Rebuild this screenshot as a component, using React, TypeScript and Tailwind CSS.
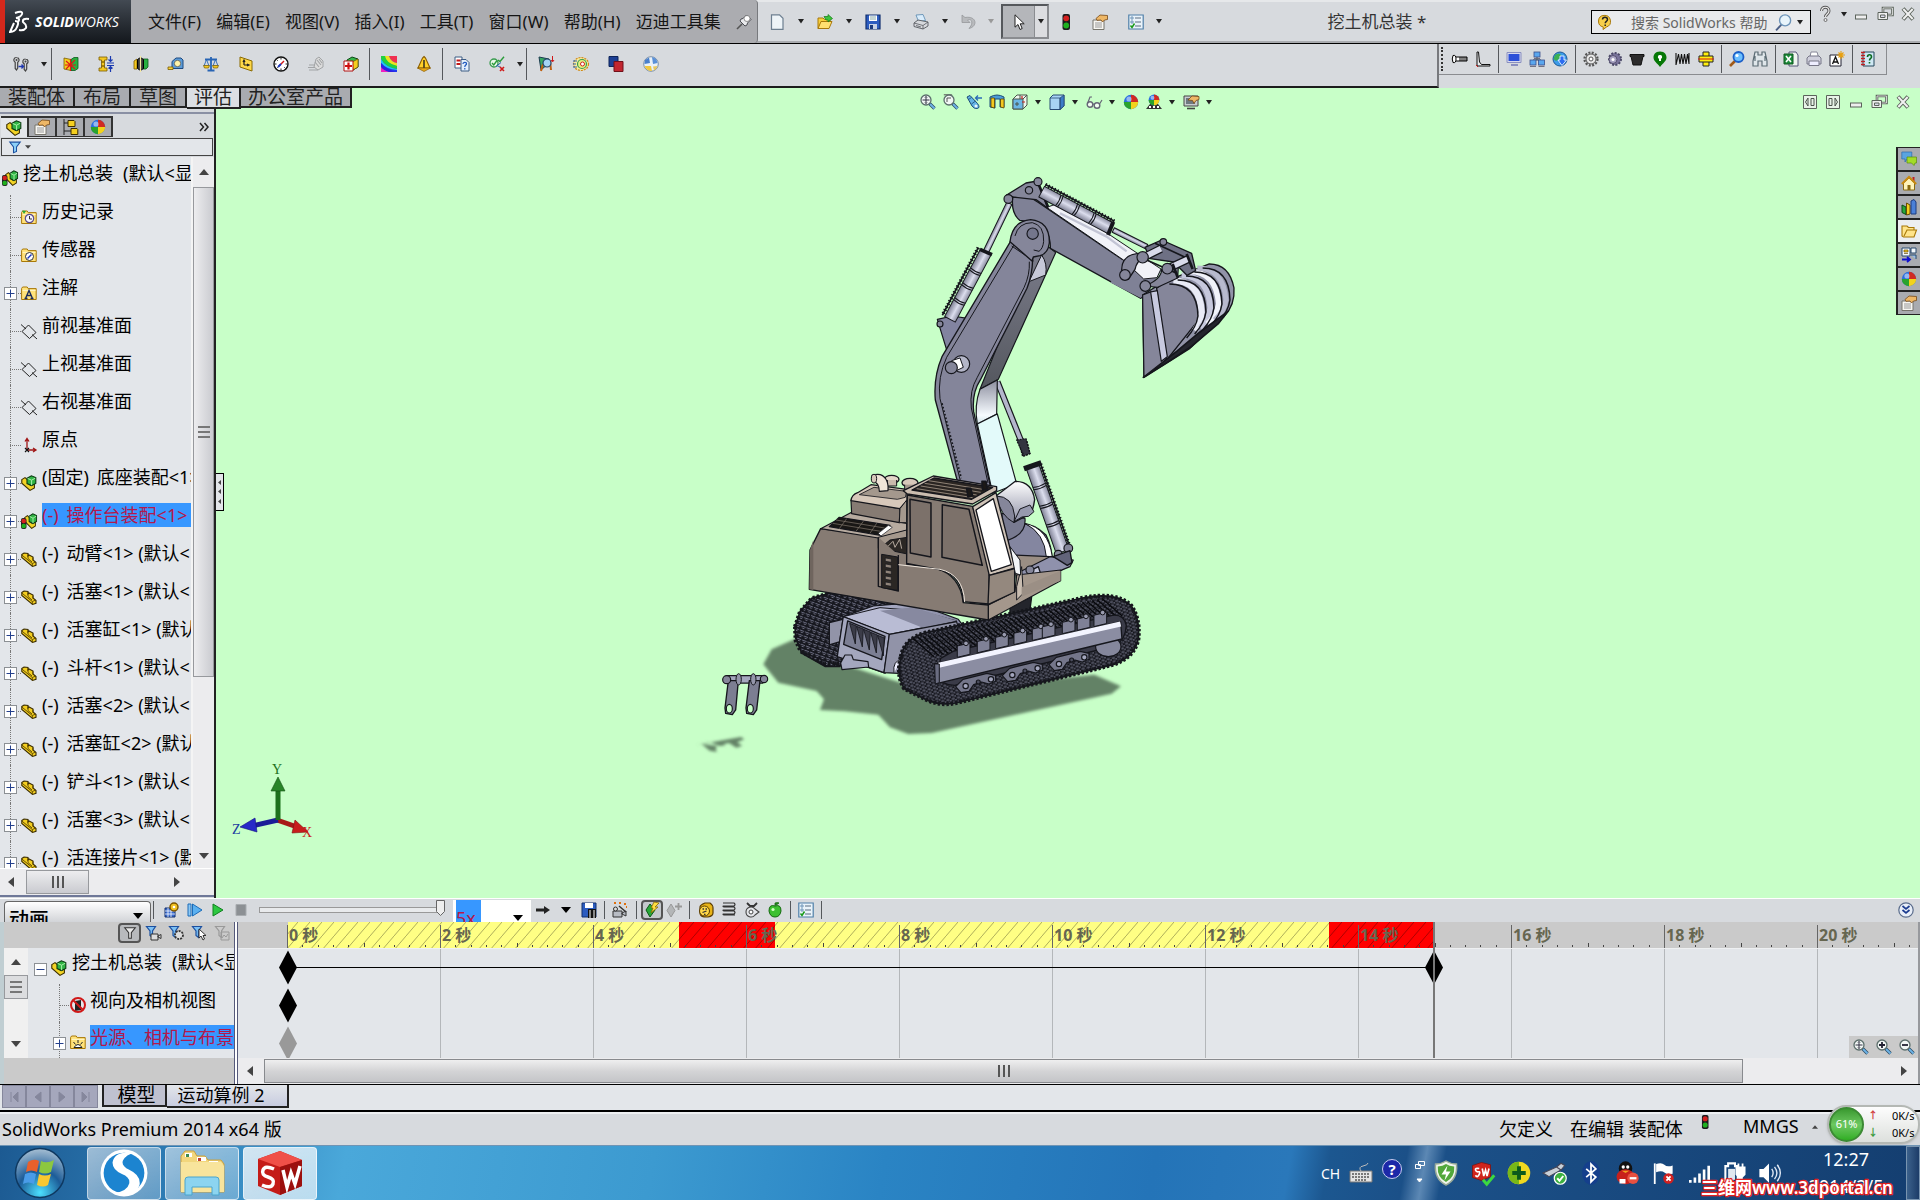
import React from "react";

const P = (d: string, fill = "none", stroke?: string, w = 1) => (
  <path d={d} fill={fill} stroke={stroke} strokeWidth={w} />
);

const mag = (inner: React.ReactNode) => (
  <>
    <path d="M9.5 9.5l5 5" stroke="#2f4f66" strokeWidth="3.4" />
    <path d="M10 10l4.5 4.5" stroke="#6fb4e8" strokeWidth="1.8" />
    <circle cx="6" cy="6" r="5" fill="#f2f7f5" stroke="#5c6f6c" strokeWidth="1.3" />
    {inner}
  </>
);

const sphere = (
  <>
    <circle cx="8" cy="8" r="7.2" fill="#2b6fe0" />
    {P("M8 8V.8A7.2 7.2 0 0 1 15.2 8z", "#d02a22")}
    {P("M8 8h7.2A7.2 7.2 0 0 1 8 15.2z", "#f2d21c")}
    {P("M8 8v7.2A7.2 7.2 0 0 1 .8 8z", "#2aa32c")}
    <circle cx="6" cy="5" r="2.6" fill="#fff" opacity=".5" />
  </>
);

const pc = (x: number, y: number) => (
  <>
    <rect x={x} y={y} width="6" height="5" fill="#5aa7ee" stroke="#3a4f8c" strokeWidth=".8" />
    <path d={`M${x} ${y + 6.4}h6`} stroke="#667" strokeWidth="1" />
  </>
);

const folder = (
  <>
    {P("M.6 14.5V3.5l1-1.5h4.6l1 1.6h8v10.9z", "#ffe27a", "#a87808")}
    {P("M1.6 5.4h13", "none", "#fff6c8")}
  </>
);

const asm = (
  <>
    {P("M.8 4.6L4 2.6l3 2.6v2.6l2.6 2.6 3.8-1.4v4L9 15.4.8 8.2z", "#f2d326", "#3a2c00", 1.1)}
    {P("M6 3.2L10.4.8l4.4 1.8v5.8l-4.2 2.2L6 8.6z", "#2fb344", "#0c3a12", 1.1)}
    {P("M6.6 3.4l4 1.8 3.6-2M10.6 5.2v5", "none", "#a8f0a8")}
  </>
);

const funnel = (c: string, f: string) => P("M1.5 1.5h9L7.5 6v6.5L5 10.5V6z", f, c, 1.2);

const ICONS: Record<string, React.ReactNode> = {
  pin: (
    <>
      {P("M1 15l5-5", "none", "#555", 1.6)}
      {P("M4 7l5 5 2-1 .5-2L15 5.500 10.5 1 7 4.500 5 5z", "#e9eaec", "#4c4e54")}
      <circle cx="11" cy="4.500" r="3" fill="#fff" stroke="#666" strokeWidth=".7" />
    </>
  ),
  doc: P("M2.500.8h8L14 4.300v11H2.500z", "#eef4f8", "#6d7f90", 1.2),
  open: (
    <>
      {P("M1 14.500V4h5l1.500 1.500H13v3", "#f7cf3c", "#a8780a")}
      {P("M1 14.500l3-7h11l-3 7z", "#ffe070", "#a8780a")}
      {P("M7 2.500h4v-2l4.500 4L11 8V6H9z", "#3cc23c", "#147a14", 0.7)}
    </>
  ),
  save: (
    <>
      {P("M1 1h14v14H1z", "#2c5cc0", "#12306e", 1.2)}
      {P("M4 1.500h8V7H4z", "#fff")}
      {P("M5 3h6M5 5h6", "none", "#8aa")}
      {P("M4 10h8v5H4z", "#c7d2e4")}
      {P("M5 11h3v4H5z", "#1b3a7c")}
    </>
  ),
  print: (
    <>
      {P("M3 1l7-.5 2.500 6-7 1z", "#d9ecfb", "#5686ad", 0.8)}
      {P("M1 9l4-3 10 2v4l-5 3-9-2.500z", "#d6d8dc", "#55585e", 0.9)}
      {P("M1 9l9 2.500L15 8M10 11.500V15M3 11.500l5 1.500", "none", "#55585e", 0.8)}
    </>
  ),
  undo: P("M1 1v7.500h8L6.500 6c4-2 6.500 3 1.500 8.500 9-2 8-13-4-11z", "#b8babd", "#96989b", 0.8),
  cursor: P("M4 .8v12.400l3-2.700 2 5 2.200-1-2-4.700h4z", "#fff", "#222"),
  light: (
    <>
      <rect x="4.500" y="0" width="7.500" height="16" rx="2" fill="#1c1c1c" />
      <circle cx="8.200" cy="4.300" r="2.900" fill="#d42020" />
      <circle cx="8.200" cy="11.500" r="2.900" fill="#1fb01f" />
    </>
  ),
  props: (
    <>
      {P("M1 6h11v9.500H1z", "#f7f6f2", "#77756c")}
      {P("M3 9h7M3 11h7M3 13h7", "none", "#999")}
      {P("M4 4.500L8 1l7.500.5v4l-3 .5-2 2-1.500-2-4 .3z", "#eeb766", "#754716", 0.8)}
    </>
  ),
  opts: (
    <>
      {P("M.8 1h14.400v14H.8z", "#eaf3fa", "#4f7fa8", 1.2)}
      {P("M3 3h2v2H3zM3 7h2v2H3z", "#fff", "#4f7fa8", 0.8)}
      {P("M7 4h6M7 8h6M7 12h6", "none", "#5a6d80")}
      {P("M2.500 11.500l1.500 2 2.500-4", "none", "#199a19", 1.5)}
    </>
  ),
  helpb: (
    <>
      {P("M1.500 7a6 6 0 1 1 8 6l-3.500 2.500.3-2.500A6 6 0 0 1 1.500 7z", "#f7cf4a", "#a8780a")}
      {P("M5.500 5.500c0-3 5-3 5 0 0 2-2.300 1.800-2.300 3.800M8.200 10.500v1.500", "none", "#222", 1.5)}
    </>
  ),
  search: (
    <>
      {P("M6 10l-5 5.500", "none", "#4c5f86", 1.8)}
      <circle cx="9.500" cy="6" r="5.200" fill="#e8f4fb" stroke="#6c93b8" strokeWidth="1.3" />
    </>
  ),
  q: (
    <>
      {P("M4.500 5c0-5 7.500-5 7.500 0 0 3-3.500 3-3.500 6", "none", "#555", 3)}
      {P("M4.500 5c0-5 7.500-5 7.500 0 0 3-3.500 3-3.500 6", "none", "#eee", 1.2)}
      <circle cx="8.500" cy="14" r="1.500" fill="#eee" stroke="#555" strokeWidth=".8" />
    </>
  ),
  min: <rect x="2.500" y="9" width="11" height="4" fill="#eee" stroke="#5b635b" />,
  rest: (
    <>
      {P("M6 2h9.500v7H6z", "none", "#5b635b", 2.6)}
      {P("M6 2h9.500v7H6z", "none", "#eee", 0.8)}
      {P("M1 6.500h9.500v7H1z", "#eee", "#5b635b")}
      {P("M3.500 9h4.500v2.500H3.500z", "#dde", "#5b635b")}
    </>
  ),
  close: (
    <>
      {P("M3 2.500l10 11M13 2.500l-10 11", "none", "#5b635b", 4)}
      {P("M3.300 3l9.400 10M12.700 3l-9.400 10", "none", "#f1f1f1", 2)}
    </>
  ),
  paneL: (
    <>
      {P("M1.500 1.500h13v13h-13z", "#e8f3e8", "#5b635b")}
      {P("M6 4L3.500 8 6 12zM9 4.500h3v7H9z", "none", "#4b534b")}
    </>
  ),
  paneR: (
    <>
      {P("M1.500 1.500h13v13h-13z", "#e8f3e8", "#5b635b")}
      {P("M10 4l2.500 4-2.500 4zM4 4.500h3v7H4z", "none", "#4b534b")}
    </>
  ),
  mates: (
    <>
      {P("M3.500 1.500a2.600 2.600 0 0 1 1.200 4.900V12l-1.200 2-1.300-1.500V6.400A2.600 2.600 0 0 1 3.500 1.500z", "#d4d6d8", "#444", 1.2)}
      {P("M12.500 3a2.600 2.600 0 0 1 1.200 4.900V13l-1.200 2-1.300-1.500V7.900A2.600 2.600 0 0 1 12.500 3z", "#d4d6d8", "#444", 1.2)}
      <circle cx="3.500" cy="4" r="1" fill="#444" />
      <circle cx="12.500" cy="5.500" r="1" fill="#444" />
      {P("M5.500 10.500h5M8.500 8.500l2 2-2 2", "none", "#2038b0", 1.3)}
    </>
  ),
  interf: (
    <>
      {P("M1 2l7 1.500v11L1 13z", "#f4cf20", "#7a5c00", 0.8)}
      {P("M8 3.500l3-2h4v11l-3 2H8z", "#28b040", "#0c5a1c", 0.8)}
      {P("M3 5l9 8M3 13l9-9M7.500 3v12M2 9h11", "none", "#e01818", 1.2)}
    </>
  ),
  clear: (
    <>
      {P("M1 1h8v3H6.500v2h-3V4H1zM1 15h8v-3H6.500v-2h-3v2H1zM3.500 6h3v4h-3z", "#f4c820", "#7a5c00", 0.8)}
      {P("M12.500 0v5M12.500 16v-5M10.500 3.500l2 2 2-2M10.500 12.500l2-2 2 2M9 7h7M9 9.500h7", "none", "#1a3ab0", 1.2)}
    </>
  ),
  hole: (
    <>
      {P("M1 5l3-2v10H1z", "#f4c820", "#7a5c00", 0.8)}
      {P("M10 3h5v8l-2 2h-3z", "#28b040", "#0c5a1c", 0.8)}
      {P("M4.500 3.500l3-2 3 2v9l-3 2-3-2z", "#3a3a3a", "#000")}
      {P("M7.500 0v16", "none", "#f6e9a0", 1.2)}
    </>
  ),
  tape: (
    <>
      {P("M4 11V5.500L8 2h5l2 2v8.500H4z", "#5b9bd8", "#1e4a80")}
      <circle cx="9.500" cy="7.500" r="3.200" fill="#fff3a8" stroke="#555" strokeWidth=".8" />
      {P("M0 11h5v2.500H0z", "#f7d33c", "#7a5c00", 0.8)}
    </>
  ),
  scale: (
    <>
      {P("M8 1v13M2 3.500h12M4.500 14.500h7", "none", "#2864b4", 1.8)}
      {P("M3.500 3.500L1 10h5zM12.500 3.500L10 10h5z", "none", "#2864b4", 0.9)}
      {P("M.5 9.500h6L5.500 12H1.500zM9.500 9.500h6l-1 2.500h-4z", "#f4c820", "#7a5c00", 0.7)}
    </>
  ),
  section: (
    <>
      {P("M2 1l12 4v10L2 11z", "#ffd94a", "#8a6a00")}
      {P("M6 9V5M5 6l1-2 1 2M6 9h4M9 8l2 1-2 1", "none", "#222", 1.2)}
    </>
  ),
  gauge: (
    <>
      <circle cx="8" cy="8" r="7" fill="#fff" stroke="#111" strokeWidth="1.4" />
      {P("M8 1.500v2M8 12.500v2M1.500 8h2M12.500 8h2M3.500 3.500l1.200 1.200M12.500 12.500l-1.200-1.200M3.500 12.500l1.200-1.200", "none", "#222")}
      {P("M6 10l5-5", "none", "#d01818", 1.5)}
      {P("M5 11l3-3", "none", "#1838c0", 1.8)}
    </>
  ),
  handgray: (
    <>
      {P("M8 3l3-2 4 4v6l-5 3-4-3z", "#dcdcdc", "#a2a4a6")}
      {P("M1 9h6M0 11.500h7M1 14h9M9 4l4 5M11 3l3 4M7 6l4 5", "none", "#a2a4a6", 1.1)}
    </>
  ),
  cross: (
    <>
      {P("M4 4l5-3 6 2v8l-5 3-6-3z", "#35b548", "#0c4a16")}
      {P("M9 6l6-3v8l-5 3z", "#f4cf20", "#6a4c00", 0.7)}
      {P("M1 5h9v10H1z", "#fff", "#b01010")}
      {P("M5.500 6.500v7M2 10h7", "none", "#d01010", 2.2)}
    </>
  ),
  rainbow: (
    <>
      {P("M0 0h16v16H0z", "#2038f0")}
      {P("M8 0h8v7Q10 6 8 0z", "#f03050")}
      {P("M0 0h8q2 6 8 7v3Q6 9 4 4L0 3z", "#f0e020")}
      {P("M0 0h4q1 7 12 10v3Q4 11 0 3z", "#20d040")}
      {P("M0 3q4 8 16 10v1Q5 13 0 7z", "#20c8f0")}
      {P("M0 7q5 6 14 9H8Q2 14 0 11z", "#3020e0")}
      {P("M0 11q2 3 8 5H0z", "#f020c0")}
    </>
  ),
  warn: (
    <>
      {P("M8 .5l1.500 1.500L14 12H2L6.500 2z", "#ffd028", "#8a5c00", 1.1)}
      {P("M8 4v8", "none", "#222", 1.4)}
      {P("M1.500 12h13L8 15.500z", "#e8a818", "#8a5c00", 0.7)}
    </>
  ),
  compare: (
    <>
      {P("M1 1h7v11H1z", "#fff", "#3c5c84")}
      {P("M2.500 4.500h4M2.500 8h4", "none", "#c01818", 1.8)}
      {P("M7 3.500h5l3 3V15H7z", "#e3eefa", "#3c5c84")}
      {P("M9 8c0-2.500 4-2 3.500 0-.3 1.200-1.700 1-1.700 3M10.800 12v1.500", "none", "#205ac0", 1.2)}
    </>
  ),
  checker: (
    <>
      <circle cx="5" cy="7" r="4" fill="#e8f8e8" stroke="#3a9c50" strokeWidth="1.3" />
      {P("M3 7l1.800 2L8 4.500M9 4l2 1.500L15 .8", "none", "#2a9c3a", 1.4)}
      {P("M7 10.500l5-4M8 9.500l4 2", "none", "#2864b4", 1)}
      {P("M11 11l4 4M15 11l-4 4", "none", "#d01818", 1.6)}
    </>
  ),
  sym: (
    <>
      {P("M1 1l10 2v4L3 14z", "#38a860", "#1c3c50")}
      {P("M3 15L5 8M12 5l1 9", "none", "#c06010", 2)}
      <circle cx="9" cy="7" r="4" fill="#a4d4f4" stroke="#246" strokeWidth="1.2" />
      {P("M14.500 0v5M13 4l1.500 2L16 4", "none", "#d01818")}
    </>
  ),
  wave: (
    <>
      <ellipse cx="8" cy="8" rx="7.500" ry="6.500" fill="#f8eca0" stroke="#d08a18" strokeDasharray="2 1" strokeWidth="1.200" />
      <circle cx="9" cy="8" r="4.500" fill="#e8f080" stroke="#3a9c50" strokeWidth="1.200" />
      <circle cx="9.500" cy="8" r="2" fill="#fff" stroke="#d02020" />
      {P("M0 5h4M0 8h3M0 11h4", "none", "#2864b4")}
    </>
  ),
  overlap: (
    <>
      {P("M1 .5h9v10H1z", "#1c3f94", "#0e2458")}
      {P("M6 5.500h9v10H6z", "#c22630", "#70101a")}
    </>
  ),
  ball3: (
    <>
      <circle cx="8" cy="8" r="7.300" fill="#e9f1f8" stroke="#7c90a8" />
      {P("M9 1a7 7 0 0 1 5.500 6L10 8z", "#5a90d8")}
      {P("M1.500 10A7 7 0 0 0 9 15l-1-5z", "#f2c840")}
      {P("M2 4l4-2.500L7 7 1.500 8z", "#4a80cc")}
      {P("M14.500 10A7 7 0 0 1 11 14.500l-1-4z", "#e8c860")}
    </>
  ),
  bolt: P("M1 4.500q3-1 3 3.500t-3 3.500q-1.500-3.500 0-7zM4 6h11v4H4M8 6v4M10 6v4M12 6v4M14 6v4", "#fff", "#000"),
  lshape: (
    <>
      {P("M2 1h1.500l1 10 2 2.500H15V15H2z", "#e8eaec", "#111", 1)}
      {P("M1 14l2 2", "none", "#d01818", 1)}
    </>
  ),
  monitor: (
    <>
      {P("M1 1.500h14v10H1z", "#d7d9ee", "#8a90c0")}
      {P("M2.500 3h11v7h-11z", "#2c50d8")}
      {P("M5 14h7", "none", "#8a90c0", 2)}
    </>
  ),
  net: (
    <>
      {P("M8 6v3M4 9h8", "none", "#345")}
      {pc(5, 1)}
      {pc(1, 9)}
      {pc(9.5, 9)}
    </>
  ),
  globe: (
    <>
      <circle cx="8" cy="8" r="7" fill="#3c9ae8" stroke="#1c5a98" />
      {P("M3 4q4-3 6 0l-2 4-3 2-2.500-2z", "#3ab054")}
      {P("M8 5h4v4h2.500L10 14.500 6 9h2z", "#2c6cf0", "#fff", 0.8)}
    </>
  ),
  gear: (
    <>
      <circle cx="8" cy="8" r="6.500" fill="none" stroke="#555" strokeWidth="2.200" strokeDasharray="2 1.400" />
      <circle cx="8" cy="8" r="5" fill="#e8e8e8" stroke="#555" />
      <circle cx="8" cy="8" r="2" fill="#fff" stroke="#555" />
    </>
  ),
  gear2: (
    <>
      <circle cx="9" cy="8" r="6" fill="#7a749c" stroke="#4c4a68" strokeWidth="2" strokeDasharray="2 1.400" />
      <circle cx="7" cy="8.500" r="4" fill="#aaa6c4" stroke="#55506f" />
      <circle cx="7" cy="8.500" r="1.500" fill="#fff" />
    </>
  ),
  pot: P("M1 3.500h14v2h-1L12 14H4L2 5.500H1z", "#2c2c2c", "#111"),
  drop: (
    <>
      {P("M8 .5C3 .5 1.500 4 1.500 6.500 1.500 10 5 12 8 16c3-4 6.500-6 6.500-9.500C14.500 4 13 .5 8 .5z", "#067806")}
      {P("M8 4a2 2 0 0 1 1 3.800V10H7V7.800A2 2 0 0 1 8 4z", "#fff")}
    </>
  ),
  spring: P("M1 2v12L3.500 3 5 13 6.500 3 8 13 9.500 3 11 13 12.500 3 14 13V2", "none", "#111", 1.1),
  coupling: (
    <>
      {P("M5 1h6v14H5z", "#ffee10", "#222")}
      {P("M1 5h14v6H1z", "#ffee10", "#222")}
      {P("M0 8h16", "none", "#d01818")}
    </>
  ),
  magb: (
    <>
      {P("M6 10l-5 5", "none", "#a05a18", 2.6)}
      <circle cx="9.500" cy="6" r="5" fill="#6cc0ff" stroke="#1c60c8" strokeWidth="1.800" />
      <circle cx="8" cy="4.500" r="1.600" fill="#fff" />
    </>
  ),
  bino: P("M3 1h3v3h4V1h3l2 9v5h-5v-5H6v5H1v-5zM3 5v5M13 5v5", "#dfe6ea", "#5c6c74", 1.2),
  excel: (
    <>
      {P("M6 1h7l2 3v11H6z", "#f0f6f0", "#557")}
      {P("M1 3h9v10H1z", "#1d8a3a", "#0e5a20")}
      {P("M3 5l5 6M8 5l-5 6", "none", "#fff", 1.6)}
    </>
  ),
  print2: (
    <>
      {P("M4 6l1-5h6l1.500 5z", "#fff", "#889")}
      {P("M1 7l2-2h10l2 2v6H1z", "#cfcfdc", "#778")}
      {P("M3 10h10v4.500H3z", "#eef", "#778")}
    </>
  ),
  anote: (
    <>
      {P("M1 4h11v11H1z", "#fff", "#223")}
      {P("M3.500 13L6.500 6l3 7M4.500 11h4", "none", "#111", 1.3)}
      {P("M12 0v8M8 4h8M9.500 1.500l5 5M14.500 1.500l-5 5", "none", "#e8a010", 1.1)}
    </>
  ),
  bookq: (
    <>
      {P("M3 1h11v14H3z", "#cfe8f4", "#27485c")}
      {P("M1 1.500h4M1 4.500h4M1 7.500h4M1 10.500h4M1 13.500h4", "none", "#c02020", 1.4)}
      {P("M7.500 6c0-3 4-3 4 0 0 1.500-2 1.500-2 3.500M9.500 11v1.500", "none", "#0a6a20", 1.6)}
    </>
  ),
  zfit: mag(P("M6 2.500v7M2.500 6h7M5 3.500l1-1 1 1M5 8.500l1 1 1-1", "none", "#334", 1)),
  zin: mag(P("M6 3v6M3 6h6", "none", "#223", 1.8)),
  zout: mag(P("M3 6h6", "none", "#223", 1.8)),
  zarea: (
    <>
      {P("M.8.8h8v4", "none", "#555")}
      {mag(P("M4 8V4h4", "none", "#555", 1))}
    </>
  ),
  prev: (
    <>
      {P("M1 3l3-1.500 7.500 8q3 4 0 5Q8 15 6 12z", "#63b4e4", "#1c4c78")}
      {P("M2.500 5.500l3-2M5.500 10l4-3", "none", "#1c4c78", 0.8)}
      <circle cx="10" cy="12" r="1.500" fill="#e8f6ff" />
      {P("M16 4h-6M12 1.500L9.500 4 12 6.500", "none", "#2c6cb8", 1.3)}
    </>
  ),
  sect: (
    <>
      {P("M1 3q7-4 14 0v10h-4V5H6v9l-5-1z", "#4a9cd8", "#1c4c78")}
      {P("M2 4h3.500v10L2 13zM11.500 5H15v9l-3.500-1z", "#f4c820", "#5a4400", 0.8)}
    </>
  ),
  view: (
    <>
      {P("M1 5l4-4h10v10l-4 4H1z", "#eef8ee", "#4a544a")}
      {P("M1 5h10v10H1z", "#6cb6e4", "#4a544a")}
      {P("M11 5l4-4M8 1v4M5 8v4M3 10h4", "none", "#4a544a")}
      {P("M10 2v3M13 8h-3", "none", "#c02020", 1.2)}
    </>
  ),
  cube: (
    <>
      {P("M1 4l3-3h11v11l-4 3.500H1z", "#a8d4f4", "#274a74")}
      {P("M11 4l4-3v11l-4 3.500z", "#3c7cc8", "#274a74", 0.8)}
      {P("M1 4h10v11.500", "none", "#274a74", 0.8)}
    </>
  ),
  glasses: (
    <>
      <circle cx="4" cy="10.500" r="2.800" fill="#f2fff2" stroke="#667" strokeWidth="1.400" />
      <circle cx="11" cy="11.500" r="2.800" fill="#f2fff2" stroke="#667" strokeWidth="1.400" />
      {P("M7 10.500q1-1 1.500 0M1.500 9.500L4 3h2M13.500 10L16 6", "none", "#667", 1.2)}
    </>
  ),
  sphere,
  scene: (
    <>
      {P("M0 15l4-5h8l4 5z", "#333")}
      {P("M3 12h2v2H3zM7 12h2v2H7zM11 12h2v2h-2z", "#fff")}
      <g transform="translate(2 0) scale(.75)">{sphere}</g>
    </>
  ),
  viewset: (
    <>
      {P("M1 2h14v10H1z", "#c8ccd0", "#444")}
      {P("M3 4h9v6H3z", "#6d7880")}
      {P("M4 14.500h8", "none", "#444", 1.6)}
      {P("M5 6l4-4 7 .5v3l-3 1-2 3-1.500-3z", "#eeb766", "#754716", 0.8)}
    </>
  ),
  chat: (
    <>
      {P("M.8 1h10v7H6l-2 3V8H.8z", "#5aa4e0", "#2c6cac", 0.7)}
      {P("M6 6h9.500v6H14l-1 2.500L10.500 12H6z", "#a2dc28", "#5a8c10", 0.7)}
    </>
  ),
  home: (
    <>
      {P("M11.500 2h2v5h-2z", "#c02020")}
      {P("M2.500 8v7h11V8L8 3z", "#fff3b8", "#8a6a10")}
      {P("M.8 9L8 2l7.200 7", "none", "#c88a10", 2)}
      {P("M6.500 10h3v5h-3z", "#8a6a10")}
    </>
  ),
  library: (
    <>
      {P("M1 6l4 2v7.500l-4-2z", "#28a838", "#0c4a16")}
      {P("M5.500 4L9 6v9l-3.500 1z", "#f4cf20", "#6a4c00")}
      {P("M10 2l3-1.500L15 3v12h-5z", "#4a80d8", "#1c3c80")}
    </>
  ),
  folderO: P("M1 3h5l1.500 1.500H13V7h2.500L13 14H2.500L1 13zM3 13l3-6h9", "#ffe48a", "#a87808", 1.1),
  palette: (
    <>
      {P("M1 1h8v8H1zM10 1h5v5h-5z", "#f4f8fc", "#28486c")}
      {P("M3 3h4v2H3zM3 6.500h4", "#f4cf20", "#6a4c00", 0.7)}
      {P("M10 8h5v4", "#9ac0e8", "#28486c")}
      {P("M1 12.500h7M6 10l3 2.500L6 15", "none", "#1010d0", 1.8)}
    </>
  ),
  asm,
  asmT: (
    <>
      <g transform="translate(3 0) scale(.85 1)">{asm}</g>
      <rect x="0" y="5" width="5.500" height="11" rx="2" fill="#222" />
      <circle cx="2.700" cy="8" r="2.300" fill="#d42020" />
      <circle cx="2.700" cy="13" r="2.300" fill="#1fb01f" />
    </>
  ),
  part: (
    <>
      {P("M.8 3.500L3 2l4 .5V5l1-1 4 2v3l3 2.500v2.800L11.500 15.500 .8 6.500z", "#f4cf20", "#3a2c00", 1.1)}
      {P("M7 3.500v4l4 3.500M12 6.500v3M.8 4l10.500 8.500v3M11.300 12.500l3.500-1.500", "none", "#5a4400", 0.9)}
    </>
  ),
  hist: (
    <>
      {folder}
      <circle cx="8.500" cy="9.500" r="4.200" fill="#f4f4ff" stroke="#5a4a90" strokeWidth="1.200" />
      {P("M8.500 7v3h2.500", "none", "#333")}
      {P("M1 1.500l4 .5-2 3z", "#28a838")}
    </>
  ),
  sensor: (
    <>
      {folder}
      <circle cx="8.500" cy="9.500" r="4" fill="#fff" stroke="#333" />
      {P("M6.500 11.500l4-4", "none", "#1838c0", 1.400)}
    </>
  ),
  note: (
    <>
      {folder}
      {P("M4.500 13.500L8 5.500l3.500 8M3.500 13.500h3M9.500 13.500h3M6 10.500h4", "none", "#1c2c5c", 1.400)}
    </>
  ),
  plane: P("M1 8.500L7.500 2 15 9.500 8.500 15.500zM0 1.500l5 4.500M11 11.500l5 4.500", "none", "#222", 1),
  origin: (
    <>
      {P("M6 13V2M4 4.500L6 1.500l2 3M6 13h8M12 11l3 2-3 2", "none", "#a01414", 1.3)}
      {P("M4 11l4 4M8 11l-4 4", "none", "#111", 1.1)}
    </>
  ),
  tree: (
    <>
      {P("M2 0v16M2 4h5M2 12h8", "none", "#222")}
      {P("M6 1.500h6l1 1v5H6zM9 9.500h6l.8 1v5H9z", "#f4cf20", "#3a2c00")}
    </>
  ),
  filt: P("M1 1.500h14L10 8v6l-4 1.500V8z", "#8cd0f8", "#1c50a0", 1.4),
  calc: (
    <>
      {P("M1 6h10v9H1z", "#3a6cd0", "#14306c")}
      {P("M1 9h10M1 12h10M4 6v9M7 6v9", "none", "#fff", 0.8)}
      <circle cx="10" cy="5" r="4" fill="#f0c020" stroke="#7a5400" strokeWidth="1.400" />
      <circle cx="10" cy="5" r="1.300" fill="#fff" />
    </>
  ),
  playstart: (
    <>
      {P("M1 2h3v12H1z", "#8cc8f4", "#1c6cb8")}
      {P("M5.500 2L15 8l-9.500 6z", "#5ab0f0", "#1c6cb8")}
    </>
  ),
  play: P("M3 2l10 6L3 14z", "#2cc840", "#108020"),
  stop: P("M3 2.500h10v11H3z", "#8c9094", "#a8acb0"),
  arrowR: P("M1 6.500h8V4l6 4-6 4V9.500H1z", "#222"),
  savem: (
    <>
      {P("M1 1h14v14H1z", "#2c5cc0", "#12306e")}
      {P("M4 1h8v5H4z", "#fff")}
      {P("M7 7h8v9H7z", "#111")}
      {P("M9 8v8M13 8v8", "none", "#fff")}
    </>
  ),
  wizard: (
    <>
      {P("M1 9h9v6H1zM10 11l4-2v5l-4-2z", "#b8bcc4", "#333")}
      <circle cx="3.500" cy="7" r="2" fill="#ddd" stroke="#333" />
      {P("M7 4l7 6", "none", "#333", 1.5)}
      {P("M2 1h2M7 1h2M12 2h2M14 5h1", "none", "#e07010", 1.8)}
    </>
  ),
  autokey: (
    <>
      {P("M6 2l5 6-5 7-4-7z", "#28a838", "#0c5a16")}
      {P("M10 0l5 1-4 4h3l-7 6 2-5H7z", "#ffe040", "#8a6a00", 0.8)}
    </>
  ),
  addkey: (
    <>
      {P("M5 2l4 6.500L5 15 1 8.500z", "#b4b6b8", "#999")}
      {P("M12.500 1v7M9 4.500h7", "none", "#999", 1.8)}
    </>
  ),
  motor: (
    <>
      {P("M2 5q0-2 5-4h5q3 2 3 5v5q0 3-5 4H6q-4-1-4-4z", "#e8b418", "#5a3c00", 1.2)}
      <circle cx="6.500" cy="9" r="5" fill="#ffd848" stroke="#5a3c00" />
      {P("M4.500 7h1.500M7.500 7H9M4.500 10.500l4-1.500M6 12.500h1.500", "none", "#333", 1.3)}
    </>
  ),
  coil: P("M2 1h11q2 1.500 0 3H3q-2 0 0 1h10q2 1.500 0 3H3q-2 0 0 1h10q2 1.500 0 3H3q-2 0 0 1h11", "none", "#333", 1.200),
  cam: (
    <>
      {P("M3 1l3 3h4l3-3", "none", "#333", 1.800)}
      {P("M2 10a5 5 0 0 1 9-3l4 3-4 3a5 5 0 0 1-9-3z", "#e4e6ea", "#444", 1.100)}
      <circle cx="7" cy="10" r="2" fill="#fff" stroke="#444" />
    </>
  ),
  apple: (
    <>
      {P("M8 4Q2 2 2 9q1 6 6 6t6-6Q14 2 8 4z", "#3cc030", "#146a10")}
      {P("M8 4V1q3-1 4 0-2 2-4 2", "#2a8a20", "#146a10", 0.8)}
      <circle cx="6" cy="7.500" r="1.600" fill="#d0ffc0" />
    </>
  ),
  chev: (
    <>
      <circle cx="8" cy="8" r="7.200" fill="#e8eef8" stroke="#5a6c8c" strokeWidth="1.200" />
      {P("M4.500 4l3.500 3 3.500-3M4.500 8l3.500 3 3.500-3", "none", "#1c3c90", 1.700)}
    </>
  ),
  f0: P("M2 2h12L9.500 7.500V14h-3V7.500z", "#e8e8e8", "#333", 1.2),
  f1: (
    <>
      {funnel("#1c50a0", "#7cc0f4")}
      {P("M6 9h7v6H6zM13 11l3-1.500v4L13 12z", "#ddd", "#333")}
    </>
  ),
  f2: (
    <>
      {funnel("#1c50a0", "#7cc0f4")}
      <circle cx="11" cy="10" r="4" fill="#ddd" stroke="#333" strokeWidth="1.800" strokeDasharray="2 1" />
    </>
  ),
  f3: (
    <>
      {funnel("#1c50a0", "#7cc0f4")}
      {P("M8 4v9l2-2 2 4 1.500-1-1.500-3.500h3z", "#fff", "#333")}
    </>
  ),
  f4: (
    <>
      {funnel("#999", "#ccc")}
      {P("M7 7h8v8H7zM8 13l2-3 2 2 2-3", "none", "#999")}
    </>
  ),
  nocam: (
    <>
      {P("M5 4l6-1v10l-6 1z", "#222")}
      <circle cx="8" cy="8" r="7" fill="none" stroke="#d01818" strokeWidth="2" />
      {P("M3.500 3.500l9 9", "none", "#d01818", 2)}
    </>
  ),
  sunf: (
    <>
      {folder}
      {P("M4 13.500q4-6 8 0zM8 6v3M3.500 8l2 2.500M12.500 8l-2 2.500", "#fff", "#222")}
    </>
  ),
};

function Ic({ n, s = 16 }: { n: string; s?: number }) {
  return (
    <svg width={s} height={s} viewBox="0 0 16 16" className="shrink-0 overflow-visible" aria-hidden="true">
      {ICONS[n]}
    </svg>
  );
}

function Btn({ n, l, c = "w-[24px]" }: { n: string; l: string; c?: string }) {
  return (
    <button type="button" aria-label={l} className={`flex h-5 shrink-0 items-center justify-center ${c}`}>
      <Ic n={n} />
    </button>
  );
}

function Arr({ l, c = "w-[24px]", dim = false }: { l: string; c?: string; dim?: boolean }) {
  return (
    <button type="button" aria-label={l} className={`flex h-5 shrink-0 items-center justify-center ${c}`}>
      <svg width="6" height="5" viewBox="0 0 6 5" aria-hidden="true">
        <path d="M0 0h6L3 4.500z" fill={dim ? "#999" : "#222"} />
      </svg>
    </button>
  );
}

function Tri({ d, s = 10, dark = false }: { d: "u" | "d" | "l" | "r"; s?: number; dark?: boolean }) {
  const p = { u: "M0 8h10L5 2z", d: "M0 2h10L5 8z", l: "M8 0v10L2 5z", r: "M2 0v10l6-5z" }[d];
  return (
    <svg width={s} height={s} viewBox="0 0 10 10" aria-hidden="true">
      <path d={p} fill={dark ? "#000" : "#444"} />
    </svg>
  );
}

const Sep = ({ c }: { c: string }) => (
  <span className={`flex shrink-0 justify-center ${c}`}>
    <span className="h-full w-px bg-[#55585c]" />
  </span>
);

const MENUS = ["文件(F)", "编辑(E)", "视图(V)", "插入(I)", "工具(T)", "窗口(W)", "帮助(H)", "迈迪工具集"];

function Header() {
  return (
    <header className="flex h-11 shrink-0 items-center border-b border-black bg-[#d7dade] shadow-[inset_0_-2px_0_#a9abaf,inset_0_2px_0_#e6e8ea]">
      <div className="flex h-full w-[131px] shrink-0 items-center border-l-[5px] border-[#d5281c] bg-linear-to-b from-[#434a53] to-[#14181d] pl-1">
        <svg width="22" height="24" viewBox="0 0 22 24" fill="none" stroke="#fff" strokeWidth="2" aria-hidden="true">
          <path d="M6 3q8-3 7 1-1 3-6 4 5 0 2 4M6 11q5 0 2 6-2 5-7 5l4-9M20 9q-7-1-6 3 4 3 3 6-2 3-7 2" />
        </svg>
        <span className="ml-1 text-[14px] italic text-white [font-family:'Open_Sans',sans-serif]">
          <b>SOLID</b>WORKS
        </span>
      </div>
      <nav className="flex h-full w-[627px] shrink-0 items-center justify-between rounded-r-sm border-r border-[#77797d] bg-[#abacb0] pl-[17px] pr-[5px] text-[17px] text-[#151515]">
        {MENUS.map((m) => (
          <button type="button" key={m} className="whitespace-nowrap">
            {m}
          </button>
        ))}
        <Btn n="pin" l="固定菜单" c="w-4" />
      </nav>
      <div className="flex h-full items-center pl-[7px]">
        <Btn n="doc" l="新建" />
        <Arr l="新建选项" />
        <Btn n="open" l="打开" />
        <Arr l="打开选项" />
        <Btn n="save" l="保存" />
        <Arr l="保存选项" />
        <Btn n="print" l="打印" />
        <Arr l="打印选项" />
        <Btn n="undo" l="撤消" />
        <Arr l="撤消选项" c="w-5" dim />
        <div className="flex h-[35px] items-center border-2 border-[#55585c] border-b-[#8a8c90] border-r-[#8a8c90] bg-[#b4b6ba]">
          <Btn n="cursor" l="选择" c="w-[31px]" />
          <span className="flex h-full items-center border-l border-[#8a8c90] bg-[#dcdde0]">
            <Arr l="选择选项" c="w-3" />
          </span>
        </div>
        <Btn n="light" l="重建模型" c="w-[34px]" />
        <Btn n="props" l="文件属性" c="w-[34px]" />
        <Btn n="opts" l="选项" c="w-[38px]" />
        <Arr l="选项菜单" c="w-2" />
      </div>
      <h1 className="min-w-0 flex-1 text-center text-[17px] text-[#333]">挖土机总装 *</h1>
      <div className="flex h-full shrink-0 items-start">
        <label className="mt-[10px] flex h-6 w-[220px] items-center border border-black bg-[#e9eaec] pl-[5px]">
          <Ic n="helpb" />
          <input
            aria-label="搜索帮助"
            placeholder="搜索 SolidWorks 帮助"
            className="ml-[18px] w-[144px] bg-transparent text-[14px] outline-none placeholder:text-[#666]"
          />
          <Ic n="search" s={17} />
          <Arr l="搜索选项" c="w-[16px]" />
        </label>
        <div className="flex pt-1">
          <Btn n="q" l="帮助" c="w-[28px]" />
          <Arr l="帮助选项" c="w-[10px]" />
          <Btn n="min" l="最小化" c="w-[24px]" />
          <Btn n="rest" l="还原" c="w-[23px]" />
          <Btn n="close" l="关闭" c="w-[24px]" />
        </div>
      </div>
    </header>
  );
}

function Group({ icons, c }: { icons: string[]; c: string }) {
  return (
    <>
      {icons.map((n) => (
        <Btn key={n} n={n} l={n} c={c} />
      ))}
    </>
  );
}

function Toolbar() {
  return (
    <div className="flex h-11 shrink-0 justify-between bg-[#d7dade]">
      <div className="flex flex-1 items-center border-b-2 border-r-2 border-b-[#1c1c1c] border-r-[#77797d] pb-[2px] pl-[3px]">
        <Btn n="mates" l="配合" c="w-[35px]" />
        <Arr l="配合选项" c="w-[11px]" />
        <Sep c="h-8 w-[4px]" />
        <Group icons={["interf", "clear", "hole", "tape", "scale", "section", "gauge", "handgray", "cross"]} c="w-[35px]" />
        <Sep c="h-8 w-[3px]" />
        <Group icons={["rainbow", "warn"]} c="w-[35px]" />
        <Sep c="h-8 w-[3px]" />
        <Group icons={["compare", "checker"]} c="w-[35px]" />
        <Arr l="检查选项" c="w-[11px]" />
        <Sep c="h-8 w-[3px]" />
        <Group icons={["sym", "wave", "overlap", "ball3"]} c="w-[35px]" />
      </div>
      <div className="shrink-0 pr-[33px]">
        <div className="flex h-[31px] items-center border-b border-r border-[#8a8c90] pr-[7px]">
          <span className="ml-[2px] mr-[5px] h-6 w-0 border-l-2 border-dotted border-[#333]" />
          <Group icons={["bolt", "lshape"]} c="w-[23px]" />
          <Sep c="h-7 w-2" />
          <Group icons={["monitor", "net", "globe"]} c="w-[23px]" />
          <Sep c="h-7 w-2" />
          <Group icons={["gear", "gear2", "pot", "drop", "spring", "coupling"]} c="w-[23px]" />
          <Sep c="h-7 w-2" />
          <Group icons={["magb", "bino"]} c="w-[23px]" />
          <Sep c="h-7 w-2" />
          <Group icons={["excel", "print2", "anote"]} c="w-[23px]" />
          <Sep c="h-7 w-2" />
          <Group icons={["bookq"]} c="w-[23px]" />
        </div>
      </div>
    </div>
  );
}

type Row = { t: string; i: string; pre?: string; x?: boolean; sel?: boolean };
const ROWS: Row[] = [
  { t: "历史记录", i: "hist" },
  { t: "传感器", i: "sensor" },
  { t: "注解", i: "note", x: true },
  { t: "前视基准面", i: "plane" },
  { t: "上视基准面", i: "plane" },
  { t: "右视基准面", i: "plane" },
  { t: "原点", i: "origin" },
  { pre: "(固定)", t: "底座装配<1>", i: "asm", x: true },
  { pre: "(-)", t: "操作台装配<1>", i: "asmT", x: true, sel: true },
  { pre: "(-)", t: "动臂<1> (默认<", i: "part", x: true },
  { pre: "(-)", t: "活塞<1> (默认<", i: "part", x: true },
  { pre: "(-)", t: "活塞缸<1> (默认<", i: "part", x: true },
  { pre: "(-)", t: "斗杆<1> (默认<", i: "part", x: true },
  { pre: "(-)", t: "活塞<2> (默认<", i: "part", x: true },
  { pre: "(-)", t: "活塞缸<2> (默认<", i: "part", x: true },
  { pre: "(-)", t: "铲斗<1> (默认<", i: "part", x: true },
  { pre: "(-)", t: "活塞<3> (默认<", i: "part", x: true },
  { pre: "(-)", t: "活连接片<1> (默认<", i: "part", x: true },
];

function Box({ minus = false }: { minus?: boolean }) {
  return (
    <svg width="13" height="13" viewBox="0 0 13 13" aria-hidden="true" className="relative shrink-0">
      <rect x=".5" y=".5" width="12" height="12" fill="#fff" stroke="#8c9094" />
      <path d={minus ? "M2.500 6.500h8" : "M2.500 6.500h8M6.500 2.500v8"} stroke="#24408c" />
    </svg>
  );
}

function FeatureTree() {
  return (
    <aside className="flex w-[216px] shrink-0 flex-col bg-[#d7dade]">
      <nav className="relative z-10 flex h-5 w-max shrink-0 text-[19px] leading-[19px] text-[#222]">
        {["装配体", "布局", "草图"].map((t) => (
          <button type="button" key={t} className="h-5 border-b-2 border-r-2 border-[#222] bg-[#a9abb0] px-[8px]">
            {t}
          </button>
        ))}
        <button type="button" className="h-[21px] border-b-2 border-r-2 border-[#222] bg-[#dcdfe3] px-[7px]">
          评估
        </button>
        <button type="button" className="h-5 border-b-2 border-r-2 border-[#222] bg-[#a9abb0] px-[7px]">
          办公室产品
        </button>
      </nav>
      <div className="flex min-h-0 flex-1 flex-col border-r-2 border-[#222] pt-1">
        <div className="flex h-[25px] shrink-0 items-end border-t-2 border-[#8a90a4] pl-px">
          {["asm", "props", "tree", "sphere"].map((n, i) => (
            <button
              type="button"
              key={n}
              aria-label={n}
              className={`flex h-[21px] w-[28px] items-center justify-center border-r-2 border-t-2 border-[#333] ${i ? "border-b bg-[#a9abb0]" : "bg-[#e3e6ea]"}`}
            >
              <Ic n={n} />
            </button>
          ))}
          <button type="button" aria-label="展开" className="ml-auto flex h-5 w-5 items-center justify-center">
            <svg width="10" height="10" viewBox="0 0 10 10" fill="none" stroke="#222" strokeWidth="1.500" aria-hidden="true">
              <path d="M1 1l3.500 4L1 9M5.500 1L9 5 5.500 9" />
            </svg>
          </button>
        </div>
        <button type="button" aria-label="过滤" className="mx-px mb-px mt-px flex h-[18px] shrink-0 items-center gap-1 border border-[#444] bg-[#e3e6ea] pl-[7px]">
          <Ic n="filt" s={12} />
          <Tri d="d" s={6} />
        </button>
        <div className="flex min-h-0 flex-1">
          <ul className="min-w-0 flex-1 overflow-hidden bg-[#e3e6ea] text-[18px] leading-8 text-black">
            <li className="flex h-[38px] items-start whitespace-nowrap pl-[2px]">
              <span className="mr-[5px] mt-[13px]">
                <Ic n="asmT" />
              </span>
              挖土机总装
              <span className="ml-[10px]">(默认&lt;显示</span>
            </li>
            {ROWS.map((r, i) => (
              <li key={i} className="relative flex h-[38px] items-start whitespace-nowrap">
                <span className="absolute inset-y-0 left-[10px] border-l border-dotted border-[#777]" />
                <span className="absolute left-[10px] top-[22px] w-[11px] border-t border-dotted border-[#777]" />
                <span className="mr-1 mt-[16px] w-[17px] shrink-0 pl-1">{r.x && <Box />}</span>
                <span className="mr-[5px] mt-[14px]">
                  <Ic n={r.i} />
                </span>
                <button
                  type="button"
                  className={r.sel ? "mt-1 h-6 bg-[#3797ff] pr-1 leading-6 text-[#b4184c]" : "h-8"}
                >
                  {r.pre && <span className="mr-2">{r.pre}</span>}
                  {r.t}
                </button>
              </li>
            ))}
          </ul>
          <div className="flex w-[23px] flex-col items-center border-l-2 border-[#f4f4f4] bg-[#ececee]">
            <span className="flex h-[30px] items-center">
              <Tri d="u" />
            </span>
            <span className="flex min-h-0 w-full flex-[489] flex-col items-center justify-center gap-[3px] border border-[#97999d] bg-linear-to-r from-[#ededef] to-[#cacbd0]">
              <i className="h-[2px] w-3 bg-[#777]" />
              <i className="h-[2px] w-3 bg-[#777]" />
              <i className="h-[2px] w-3 bg-[#777]" />
            </span>
            <span className="flex-[168]" />
            <span className="flex h-6 items-center">
              <Tri d="d" />
            </span>
          </div>
        </div>
        <div className="flex h-[27px] shrink-0 items-center border-t border-white bg-[#ececee] pl-[6px]">
          <Tri d="l" />
          <span className="ml-[10px] flex h-6 w-[63px] items-center justify-center gap-[3px] border border-[#97999d] bg-linear-to-b from-[#ededef] to-[#cacbd0]">
            <i className="h-3 w-[2px] bg-[#555]" />
            <i className="h-3 w-[2px] bg-[#555]" />
            <i className="h-3 w-[2px] bg-[#555]" />
          </span>
          <span className="ml-[83px]">
            <Tri d="r" />
          </span>
        </div>
        <div className="h-[3px] shrink-0 border-t-2 border-[#6f7898] bg-[#d7dade]" />
      </div>
    </aside>
  );
}

const K = "#15161c";

function Cyl({ a, b, w, rings, bumps }: { a: [number, number]; b: [number, number]; w: number; rings: number[]; bumps?: number }) {
  const dx = b[0] - a[0];
  const dy = b[1] - a[1];
  const len = Math.hypot(dx, dy);
  const ang = (Math.atan2(dy, dx) * 180) / Math.PI;
  return (
    <g transform={`translate(${a[0]} ${a[1]}) rotate(${ang})`}>
      <rect x="0" y={-w / 2} width={len} height={w} fill="url(#cyl)" stroke={K} strokeWidth="3" />
      {rings.map((r) => (
        <path key={r} d={`M${len * r} ${-w / 2}q5 ${w / 2} 0 ${w}M${len * r + 7} ${-w / 2}q5 ${w / 2} 0 ${w}`} fill="none" stroke={K} strokeWidth="3" />
      ))}
      {bumps !== undefined && (
        <g>
          <path d={`M0 ${bumps}H${len}`} stroke={K} strokeWidth="5" />
          <path d={`M0 ${bumps}H${len}`} stroke={K} strokeWidth="11" strokeDasharray="4 6" />
        </g>
      )}
    </g>
  );
}

function Pin({ x, y, r = 14, f = "#85869a" }: { x: number; y: number; r?: number; f?: string }) {
  return <circle cx={x} cy={y} r={r} fill={f} stroke={K} strokeWidth="3.500" />;
}

const TRACK = "M603 650q10-55 75-72l470-104q100-20 145 22 28 40 22 100-10 55-75 78l-460 112q-50 14-95-4l-72-36q-25-40-10-96z";

function Model() {
  const treads = Array.from({ length: 40 }, (_, i) => i);
  return (
    <svg viewBox="216 88 1704 810" preserveAspectRatio="xMidYMid meet" className="absolute inset-0 h-full w-full" role="img" aria-label="挖土机三维模型">
      <defs>
        <linearGradient id="cyl" x1="0" y1="0" x2="0" y2="1">
          <stop offset="0" stopColor="#8a8ca0" />
          <stop offset=".45" stopColor="#dcdeee" />
          <stop offset="1" stopColor="#7c7e92" />
        </linearGradient>
        <linearGradient id="under" x1="0" y1="0" x2="0" y2="1">
          <stop offset="0" stopColor="#7c7d8c" />
          <stop offset="1" stopColor="#54575e" />
        </linearGradient>
        <linearGradient id="bend" x1="0" y1="0" x2="0" y2="1">
          <stop offset="0" stopColor="#8c8e9e" />
          <stop offset=".8" stopColor="#f6fbff" />
          <stop offset="1" stopColor="#cfe4e8" />
        </linearGradient>
        <linearGradient id="steel" x1="0" y1="0" x2="0" y2="1">
          <stop offset="0" stopColor="#ffffff" />
          <stop offset="1" stopColor="#8e90a6" />
        </linearGradient>
        <linearGradient id="deck" x1="0" y1="0" x2="1" y2="0">
          <stop offset="0" stopColor="#bcbfd8" />
          <stop offset="1" stopColor="#8486a0" />
        </linearGradient>
        <pattern id="tread" width="16" height="11" patternUnits="userSpaceOnUse" patternTransform="rotate(-13)">
          <rect width="16" height="11" fill="#16171e" />
          <path d="M1 3h9M10 8h6" stroke="#8a8ca2" strokeWidth="2.500" />
          <path d="M4 8h4" stroke="#5a5c6e" strokeWidth="2" />
        </pattern>
        <pattern id="tread2" width="17" height="13" patternUnits="userSpaceOnUse" patternTransform="rotate(20)">
          <rect width="17" height="13" fill="#16171e" />
          <path d="M0 4h14" stroke="#6a6c80" strokeWidth="3" />
          <path d="M5 9h7" stroke="#8f91a6" strokeWidth="2" />
        </pattern>
        <filter id="soft" x="-5%" y="-5%" width="110%" height="110%">
          <feGaussianBlur stdDeviation="4" />
        </filter>
      </defs>

      <g transform="translate(700 440) scale(.3333)" strokeLinejoin="round">
        <g fill="#638266" filter="url(#soft)">
          <path d="M300 590L215 628l-25 45 45 55 115 25 22 25-12 32 75 4 100 10 35 38 55 20 70-3 540-118 28-22-80-35-500 50-250-80z" />
          <path d="M-12 915l135-24 10 7-22 9 16 10-18 6-22-14-16 3 6 4-18 2-30-12zM5 912l24 20 22 4-4-8 4-10z" />
        </g>

        <path d="M285 560l15-45 35-40 55-16 180 25 30 30-160 90-20 75-45 0-70-40-18-45z" fill="url(#tread2)" stroke={K} strokeWidth="5" />
        <path d="M285 560l15-45 35-40 55-16M285 560l2 42 15 32 72 38 50-2" fill="none" stroke={K} strokeWidth="12" strokeDasharray="7 6" />
        <path d="M388 548l40-10v65l-40 12z" fill="#9294a8" stroke={K} strokeWidth="4" />
        <path d="M930 500l65-30-5 40-60 30z" fill="#24252c" stroke={K} strokeWidth="4" />

        <path d="M430 530l90-32 120-10 135 50 30 40-200 60-50 62-143-50z" fill="url(#deck)" stroke={K} strokeWidth="3.500" />
        <path d="M430 530l138 53 202-40-110-30-120-10z" fill="#b9bcd4" stroke={K} strokeWidth="3" />
        <path d="M540 512l100-10 130 40-100 22z" fill="#8789a0" />
        <path d="M430 530l138 53-16 115-140-48z" fill="#a4a7be" stroke={K} strokeWidth="3.500" />
        <path d="M568 583l202-38 10 40-120 15-55 45-10 55-43-2z" fill="#9193a8" stroke={K} strokeWidth="3.500" />
        <path d="M582 698q-5-35 25-42" fill="#eef" stroke={K} strokeWidth="3" />
        <path d="M443 543l112 46-10 70-114-46z" fill="#7c7f94" stroke={K} strokeWidth="4" />
        {[0, 1, 2, 3, 4].map((i) => (
          <path key={i} d={`M${449 + i * 21} ${550 + i * 9}l17 62 3-54z`} fill="#3b3c48" stroke={K} strokeWidth="2.500" />
        ))}
        <path d="M435 645l20 0 5 14 44 6 2 16-80 8-4-20z" fill="#a4a7be" stroke={K} strokeWidth="3.500" />

        <path d={TRACK} fill="url(#tread)" stroke={K} strokeWidth="5" />
        <path d={TRACK} fill="none" stroke={K} strokeWidth="13" strokeDasharray="7 6" />
        {treads.map((i) => (
          <path key={i} d={`M${640 + i * 14.5} ${596 - i * 3.1}l62 54`} stroke="#08090c" strokeWidth="4" />
        ))}
        <path d="M722 655l40-22 475-107q35-4 42 30-2 45-35 62l-480 118q-42 0-54-30z" fill="#3a3b48" stroke={K} strokeWidth="4" />
        {[790, 850, 905, 960, 1015, 1045, 1105, 1150, 1200].map((x) => {
          const y = 628 - (x - 790) * 0.225;
          return (
            <g key={x}>
              <path d={`M${x - 18} ${y - 10}l38-9v34l-38 9z`} fill="#7f8196" stroke={K} strokeWidth="3" />
              <circle cx={x + 8} cy={y - 18} r="7" fill="#9a9cb0" stroke={K} strokeWidth="3" />
            </g>
          );
        })}
        <ellipse cx="1225" cy="620" rx="38" ry="30" fill="#85879c" stroke={K} strokeWidth="3.500" />
        {[825, 965, 1105].map((x, k) => {
          const y = 722 - k * 33;
          return (
            <g key={x} stroke={K} strokeWidth="3.500">
              <path d={`M${x - 58} ${y + 18}l22-22 72-18 26 6v18l-20 8-22-6-24 8-14 20-24 4z`} fill="#74768a" />
              <circle cx={x - 28} cy={y + 16} r="8" fill="#a4a7be" />
              <circle cx={x + 48} cy={y - 4} r="8" fill="#a4a7be" />
              <circle cx={x + 10} cy={y + 4} r="6" fill="#4a4c5c" />
            </g>
          );
        })}
        <path d="M704 672l558-127 4 52-556 134z" fill="#8b8da2" stroke={K} strokeWidth="4" />
        <path d="M716 676l546-124" stroke="#f3f4ff" strokeWidth="15" />
        <path d="M704 672l14 0v56l-12 4z" fill="#6a6c80" stroke={K} strokeWidth="3" />
      </g>

      <g transform="translate(900 160) scale(.3333)" strokeLinejoin="round">
        <path d="M292 665l74 185" stroke={K} strokeWidth="19" />
        <path d="M292 665l74 185" stroke="#b4b6cc" strokeWidth="12" />
        <path d="M356 845l24-4 10 40-22 8z" fill="#333540" stroke={K} strokeWidth="4" strokeDasharray="6 3" />

        <path d="M112 478l45-10 50 8-65 100z" fill="#8284a0" stroke={K} strokeWidth="3.500" />
        <Cyl a={[328, 130]} b={[258, 275]} w={17} rings={[]} />
        <Cyl a={[258, 275]} b={[150, 478]} w={36} rings={[0.28, 0.5, 0.72]} bumps={26} />
        <path d="M240 268l36 16" stroke={K} strokeWidth="11" />
        <Pin x={120} y={492} r={9} />

        <path d="M400 290l45-30 22 18-172 380-55 30z" fill="url(#under)" stroke={K} strokeWidth="3.500" />
        <path d="M425 285q18 25 12 60l-50 20z" fill="#c6c8d8" stroke={K} strokeWidth="3" />
        <path d="M240 688l52-28-2 102-58 30q-10-55 8-104z" fill="url(#bend)" stroke={K} strokeWidth="3.500" />
        <path d="M232 792l60-30 58 210-72 28z" fill="#e3fafa" stroke={K} strokeWidth="3.500" />
        <path d="M333 242L126 590q-26 60-20 130l68 250 102 30-55-245q-6-55 20-95l140-275q16-40 17-88z" fill="#84859a" stroke={K} strokeWidth="4" />
        <path d="M345 250L140 592q-28 60-20 124l62 250M388 305q2 40-16 78L232 652q-24 40-18 92l50 225" fill="none" stroke={K} strokeWidth="3" />
        <path d="M126 730l58 225" stroke={K} strokeWidth="5" strokeDasharray="5 6" />
        <path d="M335 258l66 45" stroke={K} strokeWidth="3" />

        <path d="M338 112q40-12 75 14l258 175-14 52 78 30-12 32-272-150q2-50-40-78l-52-6q-26-22-21-69z" fill="#7f8196" stroke={K} strokeWidth="4" />
        <path d="M660 300l62 10 62 22-40 60-22 22-90-46z" fill="#7f8196" />
        <path d="M440 142l35-12 140 85 168 112-12 26-40 4-62-58z" fill="#f1f2f8" stroke={K} strokeWidth="3" />
        <path d="M480 160l140 70 60 44" stroke="#c2c4d4" strokeWidth="7" fill="none" />
        <path d="M320 105l58-36 34-6 32 82-36-26-68-8z" fill="#85869a" stroke={K} strokeWidth="4" />
        <path d="M414 68l30 72" stroke={K} strokeWidth="8" />
        <Cyl a={[425, 95]} b={[632, 205]} w={36} rings={[0.24, 0.48, 0.72]} bumps={-24} />
        <path d="M640 185l-16 40" stroke={K} strokeWidth="12" />
        <Cyl a={[640, 210]} b={[740, 260]} w={15} rings={[]} />
        <Pin x={325} y={117} r={13} />
        <Pin x={387} y={91} r={11} />
        <Pin x={414} y={65} r={12} />

        <path d="M330 245q8-62 62-66 58 6 56 70-4 32-28 38l-20 4-4 12z" fill="#85869a" stroke={K} strokeWidth="4" />
        <path d="M345 228q10-40 52-40 36 8 34 56-2 22-14 30l-16-4" fill="none" stroke={K} strokeWidth="3" />
        <Pin x={398} y={221} r={17} f="#74768c" />

        <circle cx="184" cy="612" r="25" fill="#b4b6c8" stroke={K} strokeWidth="3.500" />
        <path d="M155 602l25-8 10 28-25 12z" fill="#fff" stroke={K} strokeWidth="3" />
        <Pin x={154} y={623} r={18} />

        <path d="M728 405l40-25 70-32 90-36q60 0 74 72 4 50-30 86L870 565 732 652z" fill="#9193a8" stroke={K} strokeWidth="4" />
        <path d="M770 385q60-50 112-10 28 60 8 112L800 600z" fill="#85869a" stroke={K} strokeWidth="4" />
        <path d="M820 362q80 0 85 95-5 30-20 55" fill="none" stroke="#e9ebf6" strokeWidth="19" />
        <path d="M845 346q80 0 86 98-4 30-30 60" fill="none" stroke="#c6c8dc" strokeWidth="17" />
        <path d="M868 334q80 0 88 98-6 32-34 60" fill="none" stroke="#f1f3fa" strokeWidth="16" />
        <path d="M892 324q78 0 86 96-6 36-34 60" fill="none" stroke="#b8bace" strokeWidth="15" />
        {[0, 1, 2, 3, 4].map((i) => (
          <path key={i} d={`M${808 + i * 25} ${372 - i * 12}q${84 - i} 0 ${86 - i * 1} 96-5 34-34 66`} fill="none" stroke={K} strokeWidth="4.500" />
        ))}
        <path d="M730 652l100-78 70-58 84-62-28 36-80 68-66 44z" fill="#24252d" stroke={K} strokeWidth="5" />
        <path d="M728 405l26-10 42 205-64 50z" fill="#85869a" stroke={K} strokeWidth="3.500" />
        <path d="M752 396l20-4 30 198-18 14z" fill="#c8cae0" stroke={K} strokeWidth="3.500" />

        <path d="M665 330q0-45 50-50l20 8q-25 15-30 40l-20 30z" fill="#85869a" stroke={K} strokeWidth="4" />
        <path d="M735 378q50-20 50-50l50-6-2 32-60 28z" fill="#85869a" stroke={K} strokeWidth="3.500" />
        <path d="M735 262l50-22 90 40 12 52-26 14-40-40-70-10z" fill="#6e7084" stroke={K} strokeWidth="4" />
        <path d="M765 250l100 46M740 300l90 40" stroke={K} strokeWidth="5" />
        <path d="M735 290l48-24M805 325l60-28" stroke={K} strokeWidth="25" />
        <path d="M735 290l48-24M805 325l60-28" stroke="#d8daea" strokeWidth="17" />
        <path d="M818 312l16 42M860 282l18 45" stroke={K} strokeWidth="8" />
        <Pin x={728} y={292} r={17} />
        <Pin x={675} y={345} r={16} />
        <Pin x={802} y={326} r={16} />
        <Pin x={736} y={378} r={16} />
        <Pin x={790} y={246} r={10} />
      </g>

      <g transform="translate(700 440) scale(.3333)" strokeLinejoin="round">
        <path d="M950 0l28-4 12 44-18 8z" fill="#333540" stroke={K} strokeWidth="4" strokeDasharray="6 3" />
        <path d="M900 255q90-20 138 30 20 40 18 80l-120 20z" fill="#8486a0" stroke={K} strokeWidth="4" />
        <path d="M975 250q70 15 82 100l-18 0q-5-70-64-100z" fill="#fff" stroke={K} strokeWidth="3" />
        <path d="M905 220l70 15q5 50-60 68z" fill="#787a90" stroke={K} strokeWidth="3.500" />
        <path d="M888 168l58-44q50 0 58 55-4 30-12 42l-50 26q-25-30-54-79z" fill="url(#steel)" stroke={K} strokeWidth="4" />
        <path d="M888 168q50 0 56 60l-2 20q-40-20-54-80z" fill="#85869a" stroke={K} strokeWidth="3" />
        <path d="M942 245l18-38 30-12 12 20-16 14-20 2z" fill="#9799ae" stroke={K} strokeWidth="3" />
        <Cyl a={[998, 80]} b={[1088, 335]} w={40} rings={[0.22, 0.44, 0.66]} bumps={-25} />
        <path d="M972 86l52-18" stroke={K} strokeWidth="16" />

        <path d="M940 345l110 5 60-5 5 25-30 20-130 75z" fill="#9a8e84" stroke={K} strokeWidth="3.500" />
        <path d="M965 440l-5-45 90-45 70 10-10 20z" fill="#8f91ac" stroke={K} strokeWidth="3.500" />
        <path d="M985 395l30-15 10 30-30 12z" fill="#c6c8dc" stroke={K} strokeWidth="4" />
        <Pin x={990} y={390} r={12} />
        <Pin x={1075} y={343} r={12} />
        <Pin x={1105} y={325} r={13} />
        <path d="M1060 350l50-18 6 36-14 8z" fill="#62647a" stroke={K} strokeWidth="4" />

        <path d="M865 495l80-40 5-50 132-15v32L865 540z" fill="#a4978c" stroke={K} strokeWidth="3.500" />
        <path d="M950 440l15-60 5 80-20 20z" fill="#c8bcb0" stroke={K} strokeWidth="3" />
        <path d="M965 442l117-50v30L965 470z" fill="#9b8f85" />
        <path d="M328 448l2-118 32-64 258 32 0 74 90 14q70 20 80 102l75 7v45z" fill="#867b73" stroke={K} strokeWidth="4" />
        <path d="M330 330l-2 118 12 2V300z" fill="#6f655e" />
        <path d="M362 266l90-48 168 32v22l-85 22z" fill="#b7aba0" stroke={K} strokeWidth="3.500" />
        <path d="M388 260l30-28 152 24-28 30z" fill="#191715" stroke={K} strokeWidth="4" />
        <path d="M398 250l144 24M408 240l146 24M440 236l-22 30M490 244l-22 30M530 250l-20 30" stroke="#857a70" strokeWidth="2" />
        <path d="M535 280l30-24 12 6-34 26z" fill="#fff" stroke={K} strokeWidth="2" />
        <path d="M535 292l85-22v55l-85 0z" fill="#a4988d" stroke={K} strokeWidth="3" />
        <path d="M540 325l30-25 52-8v50z" fill="#2b2724" stroke={K} strokeWidth="3" />
        <path d="M565 318l14-14 6 18 14-24 6 28" fill="none" stroke="#b7aba0" strokeWidth="3" />
        <path d="M535 292v147l60 14V345" fill="#867b73" stroke={K} strokeWidth="4" />
        <path d="M545 343l48 8v100l-48-8z" fill="#2b2724" stroke={K} strokeWidth="3" />
        {[0, 1, 2, 3, 4].map((i) => (
          <path key={i} d={`M556 ${354 + i * 18}l18 3v10l-18-3z`} fill="#8f8379" stroke={K} strokeWidth="2" />
        ))}
        <path d="M453 180l147 26-2 42-143-27z" fill="#867b73" stroke={K} strokeWidth="3.500" />
        <path d="M453 182q2-18 20-24l40-24 108 14v34l-22 24z" fill="#d7c8ba" stroke={K} strokeWidth="3.500" />
        <path d="M478 164l44-22 98 12-4 18-24 6z" fill="#a4988d" stroke={K} strokeWidth="2.500" />
        <path d="M600 206l20-26v68l-22 0z" fill="#a4988d" stroke={K} strokeWidth="3" />
        <ellipse cx="575" cy="118" rx="22" ry="12" fill="#e3d6c8" stroke={K} strokeWidth="4" />
        <path d="M562 120v18h28v-18" fill="#c8baac" stroke={K} strokeWidth="3" />
        <path d="M516 106q30-10 42 12 8 14 6 34l-26 2q0-26-22-32z" fill="#f0e5d8" stroke={K} strokeWidth="3.500" />
        <ellipse cx="522" cy="116" rx="8" ry="13" fill="#d7c8ba" stroke={K} strokeWidth="3" />
        <ellipse cx="630" cy="128" rx="24" ry="13" fill="#d7c8ba" stroke={K} strokeWidth="4" />
        <path d="M614 134v14h32v-14" fill="#a4988d" stroke={K} strokeWidth="3" />

        <path d="M622 165l196 34 50 186-2 107-76-7q-4-82-75-97l-95-18z" fill="#867b73" stroke={K} strokeWidth="4" />
        <path d="M595 374l125 14q70 16 74 98" fill="none" stroke="#efe6dc" strokeWidth="3" />
        <path d="M630 178l63 11v162l-62-12zM727 194l80 14 40 168-121-24z" fill="#7c716a" stroke={K} strokeWidth="4.500" />
        <path d="M818 200l70-42 57 226-77 22z" fill="#cfc3b7" stroke={K} strokeWidth="4" />
        <path d="M828 210l52-34 54 198-60 20z" fill="#fff" stroke={K} strokeWidth="4" />
        <path d="M868 406l76-20v70l-80 38z" fill="#94887e" stroke={K} strokeWidth="4" />
        <path d="M930 320l30 40 2 45-16-5z" fill="#f4f6f8" stroke={K} strokeWidth="3" />
        <path d="M610 152l90-44 190 32v12l-72 40-196-30z" fill="#cbbdb0" stroke={K} strokeWidth="4" />
        <path d="M636 150l66-36 176 28-64 36z" fill="#2a2522" stroke={K} strokeWidth="4" />
        {[0, 1, 2, 3].map((i) => (
          <path key={i} d={`M${650 + i * 12} ${146 - i * 8}l168 27`} stroke="#a39587" strokeWidth="2.500" />
        ))}
        <path d="M800 145l12 0 6 22-14 4zM846 124l12 0 4 24-14 2z" fill="#1c1917" stroke={K} strokeWidth="5" />

        <path d="M80 718h110" stroke={K} strokeWidth="26" />
        <path d="M80 718h110" stroke="#a4a7be" strokeWidth="19" />
        <path d="M85 722l30 0-8 88-10 14-20-4-2-16zM148 722l32 0-10 88-10 14-20-4-2-16z" fill="#7c7e92" stroke={K} strokeWidth="4" />
        <Pin x={80} y={719} r={12} />
        <Pin x={192} y={717} r={11} />
        <ellipse cx="116" cy="718" rx="8" ry="17" fill="#9496aa" stroke={K} strokeWidth="3" />
        <ellipse cx="160" cy="718" rx="8" ry="17" fill="#9496aa" stroke={K} strokeWidth="3" />
        <ellipse cx="88" cy="806" rx="9" ry="13" fill="#c8ffc8" stroke={K} strokeWidth="3.500" />
        <ellipse cx="151" cy="806" rx="9" ry="13" fill="#c8ffc8" stroke={K} strokeWidth="3.500" />
      </g>
    </svg>
  );
}

function Triad() {
  return (
    <svg width="84" height="84" viewBox="230 758 84 84" className="absolute bottom-[56px] left-[14px]" aria-label="坐标轴" role="img">
      <path d="M277 820l23 8" stroke="#a81818" strokeWidth="5" />
      <path d="M295 820l-3 13 16-1z" fill="#c81c1c" stroke="#801010" strokeWidth=".6" />
      <path d="M278 820l-26 6" stroke="#1c1c98" strokeWidth="5" />
      <path d="M255 818l2 14-17-5z" fill="#2828c8" stroke="#101080" strokeWidth=".6" />
      <path d="M278 820v-32" stroke="#1c701c" strokeWidth="5" />
      <path d="M271 791h14l-7-14z" fill="#288428" stroke="#105010" strokeWidth=".6" />
      <g className="text-[14px] [font-family:'Liberation_Serif',serif]">
        <text x="272" y="774" fill="#207020">Y</text>
        <text x="232" y="834" fill="#1c3ca0">Z</text>
        <text x="302" y="837" fill="#c81c1c">X</text>
      </g>
    </svg>
  );
}

function Viewport() {
  return (
    <main className="relative min-w-0 flex-1 bg-[#c8ffc8]">
      <Model />
      <Triad />
      <div className="absolute left-0 top-[385px] flex h-[38px] w-2 flex-col items-center justify-around border border-l-0 border-black bg-[#e3e6ea] py-1">
        <Tri d="l" s={5} />
        <Tri d="l" s={5} />
        <Tri d="l" s={5} />
      </div>
      <div className="absolute left-1/2 top-[4px] flex -translate-x-[152px]">
        <Btn n="zfit" l="整屏显示全图" c="w-[23px]" />
        <Btn n="zarea" l="局部放大" c="w-[23px]" />
        <Btn n="prev" l="上一视图" c="w-[23px]" />
        <Btn n="sect" l="剖面视图" c="w-[23px]" />
        <Btn n="view" l="视图定向" c="w-[23px]" />
        <Arr l="视图定向选项" c="w-[14px]" />
        <Btn n="cube" l="显示样式" c="w-[23px]" />
        <Arr l="显示样式选项" c="w-[14px]" />
        <Btn n="glasses" l="隐藏/显示项目" c="w-[23px]" />
        <Arr l="隐藏选项" c="w-[14px]" />
        <Btn n="sphere" l="编辑外观" c="w-[23px]" />
        <Btn n="scene" l="应用布景" c="w-[23px]" />
        <Arr l="布景选项" c="w-[14px]" />
        <Btn n="viewset" l="视图设定" c="w-[23px]" />
        <Arr l="视图设定选项" c="w-[14px]" />
      </div>
      <div className="absolute right-[5px] top-[4px] flex">
        <Btn n="paneL" l="左窗格" c="w-[23px]" />
        <Btn n="paneR" l="右窗格" c="w-[23px]" />
        <Btn n="min" l="最小化文档" c="w-[23px]" />
        <Btn n="rest" l="还原文档" c="w-[24px]" />
        <Btn n="close" l="关闭文档" c="w-[24px]" />
      </div>
      <div className="absolute right-0 top-[59px] flex flex-col">
        {["chat", "home", "library", "folderO", "palette", "sphere", "props"].map((n) => (
          <button
            type="button"
            key={n}
            aria-label={n}
            className={`flex h-6 w-6 items-center justify-center border-b border-l-2 border-t border-[#222] ${n === "folderO" ? "bg-[#eceef0]" : "bg-[#a9abb0]"}`}
          >
            <Ic n={n} />
          </button>
        ))}
      </div>
    </main>
  );
}

function MotionToolbar() {
  const sep = <Sep c="h-[18px] w-2" />;
  return (
    <div className="flex h-6 shrink-0 items-center border-t border-white bg-[#d7dade] pb-px pl-1">
      <select aria-label="算例类型" className="mt-[3px] h-[22px] w-[147px] appearance-none overflow-hidden rounded-t-sm border border-b-0 border-[#666] bg-linear-to-b from-white to-[#d0d2d6] px-1 pt-[6px] text-[20px] font-medium leading-[24px] text-black">
        <option>动画</option>
      </select>
      <span className="-ml-[18px] mr-[8px] mt-3">
        <Tri d="d" dark />
      </span>
      <Sep c="h-[18px] w-[5px]" />
      <Btn n="calc" l="计算" c="ml-[4px] w-[23px]" />
      <Btn n="playstart" l="从头播放" c="w-[23px]" />
      <Btn n="play" l="播放" c="w-[23px]" />
      <Btn n="stop" l="停止" c="w-[23px]" />
      <div className="relative ml-[7px] flex h-5 w-[186px] items-center">
        <input type="range" aria-label="时间" defaultValue={100} className="absolute inset-0 w-full opacity-0" />
        <span className="-mt-px h-[6px] flex-1 border border-[#999] bg-[#e8eaec]" />
        <svg width="9" height="16" viewBox="0 0 9 16" className="-ml-2 -mt-1" aria-hidden="true">
          <path d="M.5.5h8v11l-4 4-4-4z" fill="#eee" stroke="#666" />
        </svg>
      </div>
      <label className="ml-[8px] mt-px flex h-[22px] w-[78px] items-start overflow-hidden bg-white">
        <select aria-label="播放速度" className="ml-[3px] h-[26px] w-[25px] appearance-none overflow-hidden bg-[#3797ff] pt-[5px] text-[18px] leading-[26px] text-[#b4184c]">
          <option>5x</option>
        </select>
        <span className="ml-8 mt-[13px]">
          <Tri d="d" dark />
        </span>
      </label>
      <Btn n="arrowR" l="播放模式" c="w-[23px]" />
      <button type="button" aria-label="播放模式选项" className="flex w-[23px] justify-center">
        <Tri d="d" dark />
      </button>
      <Btn n="savem" l="保存动画" c="w-[23px]" />
      {sep}
      <Btn n="wizard" l="动画向导" c="w-[24px]" />
      {sep}
      <button type="button" aria-label="自动键码" className="ml-px flex h-[20px] w-[22px] items-center justify-center rounded-sm border-2 border-[#555] bg-[#c4c8cc]">
        <Ic n="autokey" />
      </button>
      <Btn n="addkey" l="添加键码" c="w-[22px]" />
      {sep}
      <Btn n="motor" l="马达" c="ml-px w-[23px]" />
      <Btn n="coil" l="弹簧" c="w-[23px]" />
      <Btn n="cam" l="接触" c="w-[23px]" />
      <Btn n="apple" l="引力" c="w-[23px]" />
      {sep}
      <Btn n="opts" l="运动算例属性" c="w-[23px]" />
      {sep}
      <Btn n="chev" l="折叠" c="ml-auto mr-[3px] w-[23px]" />
    </div>
  );
}

const PX = 76.5;
const X0 = 50;

function Timeline() {
  const ticks = Array.from({ length: 107 }, (_, i) => i);
  const majors = Array.from({ length: 11 }, (_, i) => i * 2);
  const end = X0 + 1146;
  const key = (x: number, y: number, f: string) => <path d={`M${x} ${y - 17}l9 17-9 17-9-17z`} fill={f} />;
  return (
    <div className="relative flex min-w-0 flex-1 flex-col border-r-2 border-[#97999d]">
      <svg className="h-[136px] w-full bg-[#e3e6ea]" role="img" aria-label="时间线">
        <defs>
          <pattern id="hatch" width="12" height="14" patternUnits="userSpaceOnUse">
            <path d="M-2 16.300L14-2.300" stroke="#000" strokeOpacity=".4" strokeWidth=".8" />
          </pattern>
        </defs>
        <rect width="100%" height="26" fill="#cacaca" />
        <rect x={X0} width="1146" height="26" fill="#ffff84" />
        <rect x="441" width="96" height="26" fill="#f00" />
        <rect x="1091" width="105" height="26" fill="#f00" />
        <rect x={X0} width="1146" height="26" fill="url(#hatch)" />
        <path d="M0 26.500h3000" stroke="#eef0f2" />
        {ticks.map((t) => (
          <rect key={t} x={Math.round(X0 - 1 + t * PX * 0.2)} y={t % 5 === 0 ? 21 : 23} width="1" height={t % 5 === 0 ? 4 : 2} fill="#444" />
        ))}
        {majors.map((s) => (
          <g key={s}>
            <rect x={X0 - 1 + s * PX} y="3" width="1" height="23" fill="#666" />
            {s > 0 && <rect x={X0 - 1 + s * PX} y="27" width="1" height="109" fill="#b4b7ba" />}
            <text x={X0 + 1 + s * PX} y="19" fill="#666650" className="text-[16px] font-bold">
              {s} 秒
            </text>
          </g>
        ))}
        <rect x={X0} y="45" width={end - X0} height="1" fill="#000" />
        {key(X0, 45.5, "#000")}
        {key(X0, 83.5, "#000")}
        {key(X0, 121.5, "#999")}
        {key(end, 45.5, "#000")}
        <rect x={end - 1} width="2" height="136" fill="#777" />
      </svg>
      <div className="absolute bottom-[26px] right-0 flex h-[22px] items-center bg-[#cacaca]">
        <Btn n="zfit" l="整屏" c="w-[23px]" />
        <Btn n="zin" l="放大" c="w-[23px]" />
        <Btn n="zout" l="缩小" c="w-[23px]" />
      </div>
      <div className="flex h-[26px] items-center bg-[#ececee] pl-[7px] pr-[9px]">
        <Tri d="l" />
        <span className="ml-[9px] flex h-6 flex-[1477] items-center justify-center gap-[3px] border border-[#888a8e] bg-linear-to-b from-[#efefef] via-[#d4d4d6] to-[#c4c5c8]">
          <i className="h-3 w-[2px] bg-[#555]" />
          <i className="h-3 w-[2px] bg-[#555]" />
          <i className="h-3 w-[2px] bg-[#555]" />
        </span>
        <span className="flex-[156]" />
        <Tri d="r" />
      </div>
    </div>
  );
}

function MotionBody() {
  return (
    <div className="flex h-[162px] shrink-0">
      <div className="flex w-[234px] shrink-0 flex-col border-l-4 border-[#c0ced2] bg-[#cacaca]">
        <div className="flex h-[26px] shrink-0 items-center justify-end pb-[4px] pr-px">
          <button type="button" aria-label="过滤器" className="flex h-5 w-[23px] items-center justify-center rounded-sm border-2 border-[#555] bg-[#b8babd]">
            <Ic n="f0" s={14} />
          </button>
          <Btn n="f1" l="过滤动画" c="w-[23px]" />
          <Btn n="f2" l="过滤驱动" c="w-[23px]" />
          <Btn n="f3" l="过滤选定" c="w-[23px]" />
          <Btn n="f4" l="过滤结果" c="w-[23px]" />
        </div>
        <div className="flex h-[110px] shrink-0 overflow-hidden bg-[#e3e6ea]">
          <div className="flex w-[24px] shrink-0 flex-col items-center bg-[#f0f0f0]">
            <span className="flex h-[27px] items-center">
              <Tri d="u" />
            </span>
            <span className="flex h-6 w-full flex-col items-center justify-center gap-[3px] border border-[#97999d] bg-[#dcdddf]">
              <i className="h-[2px] w-3 bg-[#777]" />
              <i className="h-[2px] w-3 bg-[#777]" />
              <i className="h-[2px] w-3 bg-[#777]" />
            </span>
            <span className="mb-1 mt-auto flex h-5 items-center">
              <Tri d="d" />
            </span>
          </div>
          <ul className="min-w-0 flex-1 overflow-hidden text-[18px] leading-8 text-black">
            <li className="flex h-[36px] items-start whitespace-nowrap pl-[6px] leading-7">
              <span className="mr-[4px] mt-[15px]">
                <Box minus />
              </span>
              <span className="mr-[5px] mt-[12px]">
                <Ic n="asm" />
              </span>
              挖土机总装
              <span className="ml-[10px]">(默认&lt;显</span>
            </li>
            <li className="relative flex h-[38px] items-start whitespace-nowrap pl-[42px]">
              <span className="absolute inset-y-0 left-[31px] border-l border-dotted border-[#777]" />
              <span className="absolute left-[31px] top-[21px] w-[10px] border-t border-dotted border-[#777]" />
              <span className="mr-1 mt-[13px]">
                <Ic n="nocam" />
              </span>
              视向及相机视图
            </li>
            <li className="relative flex h-[38px] items-start whitespace-nowrap pl-[25px]">
              <span className="absolute inset-y-0 left-[31px] border-l border-dotted border-[#777]" />
              <span className="mr-1 mt-[15px]">
                <Box />
              </span>
              <span className="mr-1 mt-[12px]">
                <Ic n="sunf" />
              </span>
              <span className="mt-[3px] bg-[#3797ff] leading-6 text-[#b4184c]">光源、相机与布景</span>
            </li>
          </ul>
        </div>
      </div>
      <div className="w-1 shrink-0 border-x border-[#55597a] bg-white" />
      <Timeline />
    </div>
  );
}

function BottomTabs() {
  return (
    <nav className="flex h-7 shrink-0 items-start border-b-2 border-t border-black bg-[#e3e6ea] pl-[2px]">
      {["M5 3v10M12 3v10L7 8z", "M11 3v10L5 8z", "M5 3v10l6-5z", "M4 3v10l5-5zM11 3v10"].map((d, i) => (
        <button
          type="button"
          key={i}
          aria-label={["首页", "上一页", "下一页", "末页"][i]}
          className="flex h-[23px] w-6 items-center justify-center border border-[#85879c] bg-[#a5a7bc]"
        >
          <svg width="16" height="16" viewBox="0 0 16 16" fill="#85879c" stroke="#85879c" aria-hidden="true">
            <path d={d} />
          </svg>
        </button>
      ))}
      <button type="button" className="ml-[4px] h-[22px] w-[65px] border-b-2 border-l-2 border-r-2 border-[#222] bg-[#bfc1d0] pl-1 text-[19px] leading-5">
        模型
      </button>
      <button type="button" className="h-[23px] w-[122px] border-b-2 border-r-2 border-[#222] bg-linear-to-b from-[#e3e6ea] to-[#c8cce0] pr-3 text-[18px] leading-[21px]">
        运动算例 2
      </button>
    </nav>
  );
}

function StatusBar() {
  return (
    <footer className="relative z-10 flex h-[33px] shrink-0 items-center border-t-2 border-[#eef0f2] bg-[#d7dade] pl-[2px] text-[18px] text-black">
      <span className="flex-1">SolidWorks Premium 2014 x64 版</span>
      <span className="mr-[7px]">欠定义</span>
      <span className="ml-[10px] w-[128px]">在编辑 装配体</span>
      <span className="mb-4 flex w-4">
        <Ic n="light" s={14} />
      </span>
      <button type="button" className="mb-[6px] ml-[29px] flex w-[84px] items-center justify-between pr-[9px]">
        MMGS <Tri d="u" s={6} />
      </button>
      <div className="-mt-[11px] flex h-[39px] w-[93px] items-center rounded-[19px] border-2 border-[#b4b8b4] bg-linear-to-b from-[#fdfdfd] to-[#dde0dd] text-[11px] shadow">
        <span className="flex size-[35px] items-center justify-center rounded-full border-2 border-[#3c8a34] bg-linear-to-b from-[#3a9a30] via-[#6cc860] to-[#2fae22] text-[11px] text-white">
          61%
        </span>
        <span className="ml-1 flex flex-col text-[10px] leading-[17px]">
          <b className="text-[#d04040]">↑</b>
          <b className="text-[#3c9a3c]">↓</b>
        </span>
        <span className="ml-[14px] flex flex-col leading-[17px]">
          <span>0K/s</span>
          <span>0K/s</span>
        </span>
      </div>
    </footer>
  );
}

const TRAY: { l: string; w: string; s: number; d: React.ReactNode }[] = [
  {
    l: "安全卫士", w: "w-[36px]", s: 24,
    d: (<><path d="M8 0q3 2 7 2 1 10-7 14Q0 12 1 2q4 0 7-2z" fill="#f0f4ec" stroke="#9a9" /><path d="M8 2q2 1.500 5.500 1.700Q14 11 8 14 2 11 2.500 3.700 6 3.500 8 2z" fill="#52a83c" /><path d="M9 3L5 9h3l-1 4 4-6H8z" fill="#fff" /></>),
  },
  {
    l: "SolidWorks", w: "w-[37px]", s: 24,
    d: (<><path d="M1 3l6-2 6 1.500v8L7 13 1 11z" fill="#d0241c" stroke="#80100c" strokeWidth=".5" /><path d="M5.500 5q-3-.5-2.500 1t2 1.200.3 2-2.300.3M7.500 5l1 5 1.200-4 1 4L12 5" fill="none" stroke="#fff" strokeWidth="1.100" /><path d="M8 12.500l2.500 3 5-6" fill="none" stroke="#3cd840" strokeWidth="2" /></>),
  },
  {
    l: "加速球", w: "w-[36px]", s: 24,
    d: (<><circle cx="8" cy="8" r="7.500" fill="#f0d820" /><path d="M8 .5a7.500 7.500 0 0 0 0 15z" fill="#78b818" /><path d="M8 3.500v9M3.500 8h9" stroke="#0c5a1c" strokeWidth="2.600" /></>),
  },
  {
    l: "安全删除硬件", w: "w-[36px]", s: 24,
    d: (<><path d="M0 8l9-4 3 2-8 4.500zM9 4l3-2.500L14.500 3 12 6z" fill="#c8d0d8" stroke="#445" strokeWidth=".7" /><circle cx="11.500" cy="11.500" r="4" fill="#3cb040" stroke="#fff" strokeWidth=".8" /><path d="M9.500 11.500l1.500 1.700L13.500 10" fill="none" stroke="#fff" strokeWidth="1.300" /></>),
  },
  {
    l: "蓝牙", w: "w-[36px]", s: 22,
    d: (<><ellipse cx="8" cy="8" rx="6.500" ry="8.500" fill="#153f8c" /><path d="M4.500 5l7 6L8 14.500v-13L11.500 5l-7 6" fill="none" stroke="#fff" strokeWidth="1.300" /></>),
  },
  {
    l: "QQ", w: "w-[36px]", s: 24,
    d: (<><ellipse cx="7" cy="5" rx="4.500" ry="4.800" fill="#111" /><ellipse cx="7" cy="10.500" rx="6" ry="5" fill="#c8201c" /><circle cx="5.500" cy="4" r="1.100" fill="#fff" /><circle cx="8.500" cy="4" r="1.100" fill="#fff" /><path d="M4.500 6.500h5L7 8z" fill="#f0a020" /><path d="M3 12h4v3H3z" fill="#fff" /><circle cx="12" cy="11.500" r="3.800" fill="#e85040" /><path d="M9.800 11.500h4.500" stroke="#fff" strokeWidth="1.500" /></>),
  },
  {
    l: "操作中心", w: "w-[36px]", s: 22,
    d: (<><path d="M2 1v15" stroke="#fff" strokeWidth="1.300" /><path d="M3 1.500q4-1.500 6 .5t6 .5v6q-4 1-6-.8T3 7.500z" fill="#fff" /><circle cx="12" cy="12" r="3.800" fill="#d02020" /><path d="M10.500 10.500l3 3M13.500 10.500l-3 3" stroke="#fff" strokeWidth="1.300" /></>),
  },
  { l: "网络", w: "w-[36px]", s: 21, d: <path d="M0 13h2v2H0zM3.500 11h2v4h-2zM7 8h2v7H7zM10.500 5h2v10h-2zM14 2h2v13h-2z" fill="#fff" /> },
  {
    l: "电源", w: "w-[35px]", s: 22,
    d: (<><path d="M1 3h2V1h5v2h2v12H1z" fill="none" stroke="#fff" strokeWidth="1.500" /><path d="M3 5h5v8H3z" fill="#e0e8f0" /><path d="M9 4h6v5l-2 2v4h-2v-4L9 9zM10.500 1v3M13.500 1v3" fill="#fff" stroke="#fff" strokeWidth="1.300" /></>),
  },
  {
    l: "音量", w: "w-[34px]", s: 22,
    d: (<><path d="M1 5h3l4-4v14l-4-4H1z" fill="#fff" /><path d="M10 5q2 3 0 6M12 3.500q3.500 4.500 0 9M14 2q4.500 6 0 12" fill="none" stroke="#dfe8f4" strokeWidth="1" /></>),
  },
];

function Taskbar() {
  const task = "flex h-[53px] w-[74px] items-center justify-center rounded-sm border border-white/60 bg-linear-to-br from-white/55 to-white/25";
  return (
    <div className="relative flex h-[55px] shrink-0 items-center overflow-hidden border-t border-[#6f94b4] bg-[linear-gradient(100deg,#1c5a92_0%,#2f7fb8_10%,#4aa8da_18%,#3c9ad0_34%,#2a84c4_46%,#2474b8_60%,#2a78ba_67%,#1c5790_69%,#1b5088_73%,#5c88b4_74%,#1b5088_75%,#143e70_100%)]">
      <button type="button" aria-label="开始" className="flex w-[87px] shrink-0 justify-start pl-[14px]">
        <svg width="52" height="52" viewBox="0 0 52 52" aria-hidden="true">
          <defs>
            <radialGradient id="orb" cx=".5" cy=".9" r=".9">
              <stop offset="0" stopColor="#4ce0ff" />
              <stop offset=".5" stopColor="#1c5c98" />
              <stop offset="1" stopColor="#a8c0d4" />
            </radialGradient>
          </defs>
          <circle cx="26" cy="26" r="24.500" fill="url(#orb)" stroke="#0e3860" strokeWidth="1.500" />
          <path d="M14 15q6-4 11-1l-2 11q-6-3-11 0z" fill="#e8602c" />
          <path d="M27 14q6 3 13-1l-3 12q-6 3-12 0z" fill="#8cc840" />
          <path d="M11 27q6-3 11 0l-2 10q-6-3-11 0z" fill="#4a9ce8" />
          <path d="M25 27q6 3 12 0l-3 11q-5 3-11 0z" fill="#f8c830" />
        </svg>
      </button>
      <div className="flex gap-1">
        <button type="button" aria-label="搜狗浏览器" className={task}>
          <svg width="48" height="48" viewBox="0 0 46 46" aria-hidden="true">
            <circle cx="23" cy="23" r="22.500" fill="#fff" />
            <circle cx="23" cy="23" r="19.500" fill="#1c84d0" />
            <path d="M33 4Q14 1 12 13q0 7 9 11 8 3 7 9-2 8-15 9 22 6 25-8 1-9-10-14-8-4-6-9 3-6 11-7z" fill="#fff" />
          </svg>
        </button>
        <button type="button" aria-label="资源管理器" className={task}>
          <svg width="48" height="46" viewBox="0 0 48 46" aria-hidden="true">
            <path d="M3 6l4-5h9l3 5h8l3 4h13l3 4v28H3z" fill="#f2d67c" stroke="#c8a040" />
            <path d="M7 3h7v4H7zM19 7h9v4h-9zM31 11h9v4h-9z" fill="#fff" />
            <path d="M8 4h3v3H8z" fill="#3c8a50" />
            <path d="M20 8h3v3h-3z" fill="#c04030" />
            <path d="M32 12h3v3h-3z" fill="#3c70b0" />
            <path d="M3 12h40l3 4v26H3z" fill="#f8e49c" />
            <path d="M7 45V30q0-3 3-3h28q3 0 3 3v15h-7v-8H14v8z" fill="#8cd4f0" stroke="#4aa4cc" />
          </svg>
        </button>
        <button type="button" aria-label="SolidWorks" className={`${task} bg-white/50`}>
          <svg width="46" height="46" viewBox="0 0 46 46" aria-hidden="true">
            <path d="M1 9L23 1l22 9v26L23 45 1 36z" fill="#c41c18" />
            <path d="M1 9L23 1l22 9-22 7z" fill="#f05048" />
            <path d="M23 17l22-7v26l-22 9z" fill="#9c100e" />
            <path d="M17 19q-9-4-11 1t5 7 5 7-11 1" fill="none" stroke="#fff" strokeWidth="3.500" />
            <path d="M26 20l4 17 4-14 4 11 5-18" fill="none" stroke="#fff" strokeWidth="3.500" />
          </svg>
        </button>
      </div>
      <div className="relative ml-auto flex h-full shrink-0 items-center">
        <span className="w-[28px] text-[14px] text-white">CH</span>
        <svg width="24" height="22" viewBox="0 0 24 22" className="mr-[9px]" role="img" aria-label="键盘">
          <path d="M1 9h22v11H1z" fill="#e4e4e4" stroke="#777" />
          <path d="M3 12h18M3 15h18M6 18h12" stroke="#555" strokeWidth="1.500" strokeDasharray="2 1" />
          <path d="M12 9q-3-4 2-5t5-3" fill="none" stroke="#bbb" />
        </svg>
        <span className="mb-2 flex size-5 items-center justify-center rounded-full border border-[#c8ccf0] bg-[#1c28a8] text-[15px] font-bold text-white">?</span>
        <svg width="12" height="26" viewBox="0 0 12 26" fill="none" stroke="#fff" className="ml-[12px] mr-[2px]" aria-hidden="true">
          <path d="M4.500 1.500h6v4h-6zM1.500 4.500h5v4h-5z" />
          <path d="M3 19h5l-2.500 3z" fill="#fff" />
        </svg>
        {TRAY.map((t) => (
          <button type="button" key={t.l} aria-label={t.l} className={`flex shrink-0 justify-center ${t.w}`}>
            <svg width={t.s} height={t.s} viewBox="0 0 16 16" className="overflow-visible" aria-hidden="true">
              {t.d}
            </svg>
          </button>
        ))}
        <div className="flex w-[120px] flex-col items-center justify-center text-[18px] leading-[27px] text-white">
          <span>12:27</span>
          <span>2014/2/5</span>
        </div>
        <button type="button" aria-label="显示桌面" className="h-full w-[14px] border border-[#7894b0] bg-linear-to-r from-[#3c628c] to-[#1c3c68]" />
        <svg width="204" height="24" viewBox="0 0 204 24" className="absolute bottom-0 right-[16px]" role="img" aria-label="三维网">
          <text x="1" y="18" fill="#fff" stroke="#e02020" strokeWidth="2.500" strokeLinejoin="round" paintOrder="stroke" className="text-[17px] font-semibold">
            三维网www.3dportal.cn
          </text>
        </svg>
      </div>
    </div>
  );
}

export default function App() {
  return (
    <div className="flex h-screen min-h-[700px] flex-col overflow-hidden bg-[#d7dade] [font-family:'Noto_Sans','Noto_Sans_CJK_SC',sans-serif]">
      <Header />
      <Toolbar />
      <div className="flex min-h-0 flex-1">
        <FeatureTree />
        <Viewport />
      </div>
      <MotionToolbar />
      <MotionBody />
      <BottomTabs />
      <StatusBar />
      <Taskbar />
    </div>
  );
}
